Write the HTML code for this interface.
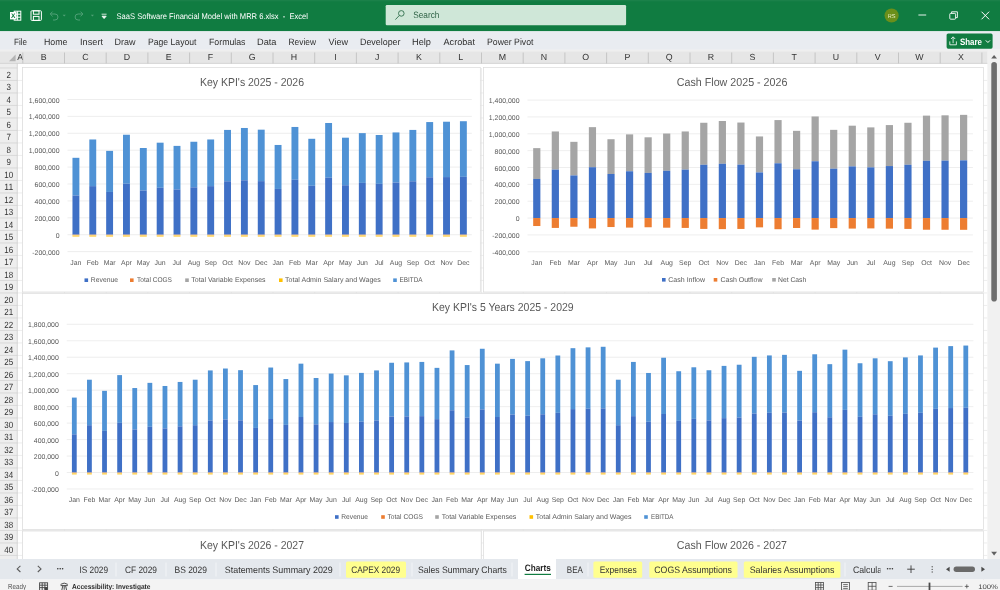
<!DOCTYPE html>
<html lang="en"><head><meta charset="utf-8"><title>SaaS Software Financial Model with MRR 6.xlsx - Excel</title><style>html,body{margin:0;padding:0;background:#fff;overflow:hidden}body{width:1000px;height:590px}svg text{white-space:pre;text-rendering:geometricPrecision}</style></head>
<body>
<svg width="1000" height="590" viewBox="0 0 1000 590" font-family='"Liberation Sans", sans-serif' style="display:block;will-change:transform">
<rect x="0.00" y="0.00" width="1000.00" height="590.00" fill="#ffffff" />
<line x1="22.80" y1="68.00" x2="22.80" y2="559.00" stroke="#e2e2e2" stroke-width="0.6" />
<line x1="64.50" y1="68.00" x2="64.50" y2="559.00" stroke="#e2e2e2" stroke-width="0.6" />
<line x1="106.20" y1="68.00" x2="106.20" y2="559.00" stroke="#e2e2e2" stroke-width="0.6" />
<line x1="147.90" y1="68.00" x2="147.90" y2="559.00" stroke="#e2e2e2" stroke-width="0.6" />
<line x1="189.60" y1="68.00" x2="189.60" y2="559.00" stroke="#e2e2e2" stroke-width="0.6" />
<line x1="231.30" y1="68.00" x2="231.30" y2="559.00" stroke="#e2e2e2" stroke-width="0.6" />
<line x1="273.00" y1="68.00" x2="273.00" y2="559.00" stroke="#e2e2e2" stroke-width="0.6" />
<line x1="314.70" y1="68.00" x2="314.70" y2="559.00" stroke="#e2e2e2" stroke-width="0.6" />
<line x1="356.40" y1="68.00" x2="356.40" y2="559.00" stroke="#e2e2e2" stroke-width="0.6" />
<line x1="398.10" y1="68.00" x2="398.10" y2="559.00" stroke="#e2e2e2" stroke-width="0.6" />
<line x1="439.80" y1="68.00" x2="439.80" y2="559.00" stroke="#e2e2e2" stroke-width="0.6" />
<line x1="481.50" y1="68.00" x2="481.50" y2="559.00" stroke="#e2e2e2" stroke-width="0.6" />
<line x1="523.20" y1="68.00" x2="523.20" y2="559.00" stroke="#e2e2e2" stroke-width="0.6" />
<line x1="564.90" y1="68.00" x2="564.90" y2="559.00" stroke="#e2e2e2" stroke-width="0.6" />
<line x1="606.60" y1="68.00" x2="606.60" y2="559.00" stroke="#e2e2e2" stroke-width="0.6" />
<line x1="648.30" y1="68.00" x2="648.30" y2="559.00" stroke="#e2e2e2" stroke-width="0.6" />
<line x1="690.00" y1="68.00" x2="690.00" y2="559.00" stroke="#e2e2e2" stroke-width="0.6" />
<line x1="731.70" y1="68.00" x2="731.70" y2="559.00" stroke="#e2e2e2" stroke-width="0.6" />
<line x1="773.40" y1="68.00" x2="773.40" y2="559.00" stroke="#e2e2e2" stroke-width="0.6" />
<line x1="815.10" y1="68.00" x2="815.10" y2="559.00" stroke="#e2e2e2" stroke-width="0.6" />
<line x1="856.80" y1="68.00" x2="856.80" y2="559.00" stroke="#e2e2e2" stroke-width="0.6" />
<line x1="898.50" y1="68.00" x2="898.50" y2="559.00" stroke="#e2e2e2" stroke-width="0.6" />
<line x1="940.20" y1="68.00" x2="940.20" y2="559.00" stroke="#e2e2e2" stroke-width="0.6" />
<line x1="981.90" y1="68.00" x2="981.90" y2="559.00" stroke="#e2e2e2" stroke-width="0.6" />
<line x1="17.30" y1="80.45" x2="987.40" y2="80.45" stroke="#e2e2e2" stroke-width="0.6" />
<line x1="17.30" y1="92.95" x2="987.40" y2="92.95" stroke="#e2e2e2" stroke-width="0.6" />
<line x1="17.30" y1="105.45" x2="987.40" y2="105.45" stroke="#e2e2e2" stroke-width="0.6" />
<line x1="17.30" y1="117.95" x2="987.40" y2="117.95" stroke="#e2e2e2" stroke-width="0.6" />
<line x1="17.30" y1="130.45" x2="987.40" y2="130.45" stroke="#e2e2e2" stroke-width="0.6" />
<line x1="17.30" y1="142.95" x2="987.40" y2="142.95" stroke="#e2e2e2" stroke-width="0.6" />
<line x1="17.30" y1="155.45" x2="987.40" y2="155.45" stroke="#e2e2e2" stroke-width="0.6" />
<line x1="17.30" y1="167.95" x2="987.40" y2="167.95" stroke="#e2e2e2" stroke-width="0.6" />
<line x1="17.30" y1="180.45" x2="987.40" y2="180.45" stroke="#e2e2e2" stroke-width="0.6" />
<line x1="17.30" y1="192.95" x2="987.40" y2="192.95" stroke="#e2e2e2" stroke-width="0.6" />
<line x1="17.30" y1="205.45" x2="987.40" y2="205.45" stroke="#e2e2e2" stroke-width="0.6" />
<line x1="17.30" y1="217.95" x2="987.40" y2="217.95" stroke="#e2e2e2" stroke-width="0.6" />
<line x1="17.30" y1="230.45" x2="987.40" y2="230.45" stroke="#e2e2e2" stroke-width="0.6" />
<line x1="17.30" y1="242.95" x2="987.40" y2="242.95" stroke="#e2e2e2" stroke-width="0.6" />
<line x1="17.30" y1="255.45" x2="987.40" y2="255.45" stroke="#e2e2e2" stroke-width="0.6" />
<line x1="17.30" y1="267.95" x2="987.40" y2="267.95" stroke="#e2e2e2" stroke-width="0.6" />
<line x1="17.30" y1="280.45" x2="987.40" y2="280.45" stroke="#e2e2e2" stroke-width="0.6" />
<line x1="17.30" y1="292.95" x2="987.40" y2="292.95" stroke="#e2e2e2" stroke-width="0.6" />
<line x1="17.30" y1="305.45" x2="987.40" y2="305.45" stroke="#e2e2e2" stroke-width="0.6" />
<line x1="17.30" y1="317.95" x2="987.40" y2="317.95" stroke="#e2e2e2" stroke-width="0.6" />
<line x1="17.30" y1="330.45" x2="987.40" y2="330.45" stroke="#e2e2e2" stroke-width="0.6" />
<line x1="17.30" y1="342.95" x2="987.40" y2="342.95" stroke="#e2e2e2" stroke-width="0.6" />
<line x1="17.30" y1="355.45" x2="987.40" y2="355.45" stroke="#e2e2e2" stroke-width="0.6" />
<line x1="17.30" y1="367.95" x2="987.40" y2="367.95" stroke="#e2e2e2" stroke-width="0.6" />
<line x1="17.30" y1="380.45" x2="987.40" y2="380.45" stroke="#e2e2e2" stroke-width="0.6" />
<line x1="17.30" y1="392.95" x2="987.40" y2="392.95" stroke="#e2e2e2" stroke-width="0.6" />
<line x1="17.30" y1="405.45" x2="987.40" y2="405.45" stroke="#e2e2e2" stroke-width="0.6" />
<line x1="17.30" y1="417.95" x2="987.40" y2="417.95" stroke="#e2e2e2" stroke-width="0.6" />
<line x1="17.30" y1="430.45" x2="987.40" y2="430.45" stroke="#e2e2e2" stroke-width="0.6" />
<line x1="17.30" y1="442.95" x2="987.40" y2="442.95" stroke="#e2e2e2" stroke-width="0.6" />
<line x1="17.30" y1="455.45" x2="987.40" y2="455.45" stroke="#e2e2e2" stroke-width="0.6" />
<line x1="17.30" y1="467.95" x2="987.40" y2="467.95" stroke="#e2e2e2" stroke-width="0.6" />
<line x1="17.30" y1="480.45" x2="987.40" y2="480.45" stroke="#e2e2e2" stroke-width="0.6" />
<line x1="17.30" y1="492.95" x2="987.40" y2="492.95" stroke="#e2e2e2" stroke-width="0.6" />
<line x1="17.30" y1="505.45" x2="987.40" y2="505.45" stroke="#e2e2e2" stroke-width="0.6" />
<line x1="17.30" y1="517.95" x2="987.40" y2="517.95" stroke="#e2e2e2" stroke-width="0.6" />
<line x1="17.30" y1="530.45" x2="987.40" y2="530.45" stroke="#e2e2e2" stroke-width="0.6" />
<line x1="17.30" y1="542.95" x2="987.40" y2="542.95" stroke="#e2e2e2" stroke-width="0.6" />
<line x1="17.30" y1="555.45" x2="987.40" y2="555.45" stroke="#e2e2e2" stroke-width="0.6" />
<rect x="22.50" y="67.50" width="457.80" height="224.50" fill="#ffffff" stroke="#dadada" stroke-width="0.7"/>
<text x="200.00" y="86.00" font-size="11.6" fill="#595959" textLength="104.00" lengthAdjust="spacingAndGlyphs">Key KPI's 2025 - 2026</text>
<line x1="67.50" y1="99.50" x2="471.80" y2="99.50" stroke="#e6e6e6" stroke-width="0.7" />
<text x="59.50" y="103.00" font-size="6.9" fill="#595959" text-anchor="end">1,600,000</text>
<line x1="67.50" y1="116.40" x2="471.80" y2="116.40" stroke="#e6e6e6" stroke-width="0.7" />
<text x="59.50" y="119.00" font-size="6.9" fill="#595959" text-anchor="end">1,400,000</text>
<line x1="67.50" y1="133.30" x2="471.80" y2="133.30" stroke="#e6e6e6" stroke-width="0.7" />
<text x="59.50" y="136.00" font-size="6.9" fill="#595959" text-anchor="end">1,200,000</text>
<line x1="67.50" y1="150.20" x2="471.80" y2="150.20" stroke="#e6e6e6" stroke-width="0.7" />
<text x="59.50" y="153.00" font-size="6.9" fill="#595959" text-anchor="end">1,000,000</text>
<line x1="67.50" y1="167.10" x2="471.80" y2="167.10" stroke="#e6e6e6" stroke-width="0.7" />
<text x="59.50" y="170.00" font-size="6.9" fill="#595959" text-anchor="end">800,000</text>
<line x1="67.50" y1="184.00" x2="471.80" y2="184.00" stroke="#e6e6e6" stroke-width="0.7" />
<text x="59.50" y="187.00" font-size="6.9" fill="#595959" text-anchor="end">600,000</text>
<line x1="67.50" y1="200.90" x2="471.80" y2="200.90" stroke="#e6e6e6" stroke-width="0.7" />
<text x="59.50" y="204.00" font-size="6.9" fill="#595959" text-anchor="end">400,000</text>
<line x1="67.50" y1="217.80" x2="471.80" y2="217.80" stroke="#e6e6e6" stroke-width="0.7" />
<text x="59.50" y="221.00" font-size="6.9" fill="#595959" text-anchor="end">200,000</text>
<line x1="67.50" y1="234.70" x2="471.80" y2="234.70" stroke="#e6e6e6" stroke-width="0.7" />
<text x="59.50" y="238.00" font-size="6.9" fill="#595959" text-anchor="end">0</text>
<line x1="67.50" y1="251.60" x2="471.80" y2="251.60" stroke="#e6e6e6" stroke-width="0.7" />
<text x="59.50" y="255.00" font-size="6.9" fill="#595959" text-anchor="end">-200,000</text>
<rect x="72.47" y="157.81" width="6.90" height="37.68" fill="#4f92d5" />
<rect x="72.47" y="195.48" width="6.90" height="39.22" fill="#3f70c6" />
<rect x="72.47" y="234.70" width="6.90" height="0.60" fill="#f2a263" />
<rect x="72.47" y="235.30" width="6.90" height="1.40" fill="#ffd050" />
<text x="75.92" y="265.00" font-size="6.9" fill="#595959" text-anchor="middle">Jan</text>
<rect x="89.32" y="139.47" width="6.90" height="46.66" fill="#4f92d5" />
<rect x="89.32" y="186.13" width="6.90" height="48.57" fill="#3f70c6" />
<rect x="89.32" y="234.70" width="6.90" height="0.60" fill="#f2a263" />
<rect x="89.32" y="235.30" width="6.90" height="1.40" fill="#ffd050" />
<text x="92.77" y="265.00" font-size="6.9" fill="#595959" text-anchor="middle">Feb</text>
<rect x="106.16" y="150.88" width="6.90" height="41.07" fill="#4f92d5" />
<rect x="106.16" y="191.95" width="6.90" height="42.75" fill="#3f70c6" />
<rect x="106.16" y="234.70" width="6.90" height="0.60" fill="#f2a263" />
<rect x="106.16" y="235.30" width="6.90" height="1.40" fill="#ffd050" />
<text x="109.61" y="265.00" font-size="6.9" fill="#595959" text-anchor="middle">Mar</text>
<rect x="123.01" y="134.74" width="6.90" height="48.98" fill="#4f92d5" />
<rect x="123.01" y="183.72" width="6.90" height="50.98" fill="#3f70c6" />
<rect x="123.01" y="234.70" width="6.90" height="0.60" fill="#f2a263" />
<rect x="123.01" y="235.30" width="6.90" height="1.40" fill="#ffd050" />
<text x="126.46" y="265.00" font-size="6.9" fill="#595959" text-anchor="middle">Apr</text>
<rect x="139.86" y="148.00" width="6.90" height="42.48" fill="#4f92d5" />
<rect x="139.86" y="190.48" width="6.90" height="44.22" fill="#3f70c6" />
<rect x="139.86" y="234.70" width="6.90" height="0.60" fill="#f2a263" />
<rect x="139.86" y="235.30" width="6.90" height="1.40" fill="#ffd050" />
<text x="143.31" y="265.00" font-size="6.9" fill="#595959" text-anchor="middle">May</text>
<rect x="156.70" y="142.68" width="6.90" height="45.09" fill="#4f92d5" />
<rect x="156.70" y="187.77" width="6.90" height="46.93" fill="#3f70c6" />
<rect x="156.70" y="234.70" width="6.90" height="0.60" fill="#f2a263" />
<rect x="156.70" y="235.30" width="6.90" height="1.40" fill="#ffd050" />
<text x="160.15" y="265.00" font-size="6.9" fill="#595959" text-anchor="middle">Jun</text>
<rect x="173.55" y="145.89" width="6.90" height="43.52" fill="#4f92d5" />
<rect x="173.55" y="189.41" width="6.90" height="45.29" fill="#3f70c6" />
<rect x="173.55" y="234.70" width="6.90" height="0.60" fill="#f2a263" />
<rect x="173.55" y="235.30" width="6.90" height="1.40" fill="#ffd050" />
<text x="177.00" y="265.00" font-size="6.9" fill="#595959" text-anchor="middle">Jul</text>
<rect x="190.39" y="141.75" width="6.90" height="45.55" fill="#4f92d5" />
<rect x="190.39" y="187.30" width="6.90" height="47.40" fill="#3f70c6" />
<rect x="190.39" y="234.70" width="6.90" height="0.60" fill="#f2a263" />
<rect x="190.39" y="235.30" width="6.90" height="1.40" fill="#ffd050" />
<text x="193.84" y="265.00" font-size="6.9" fill="#595959" text-anchor="middle">Aug</text>
<rect x="207.24" y="139.47" width="6.90" height="46.66" fill="#4f92d5" />
<rect x="207.24" y="186.13" width="6.90" height="48.57" fill="#3f70c6" />
<rect x="207.24" y="234.70" width="6.90" height="0.60" fill="#f2a263" />
<rect x="207.24" y="235.30" width="6.90" height="1.40" fill="#ffd050" />
<text x="210.69" y="265.00" font-size="6.9" fill="#595959" text-anchor="middle">Sep</text>
<rect x="224.09" y="129.92" width="6.90" height="51.34" fill="#4f92d5" />
<rect x="224.09" y="181.26" width="6.90" height="53.44" fill="#3f70c6" />
<rect x="224.09" y="234.70" width="6.90" height="0.60" fill="#f2a263" />
<rect x="224.09" y="235.30" width="6.90" height="1.40" fill="#ffd050" />
<text x="227.54" y="265.00" font-size="6.9" fill="#595959" text-anchor="middle">Oct</text>
<rect x="240.93" y="127.98" width="6.90" height="52.29" fill="#4f92d5" />
<rect x="240.93" y="180.27" width="6.90" height="54.43" fill="#3f70c6" />
<rect x="240.93" y="234.70" width="6.90" height="0.60" fill="#f2a263" />
<rect x="240.93" y="235.30" width="6.90" height="1.40" fill="#ffd050" />
<text x="244.38" y="265.00" font-size="6.9" fill="#595959" text-anchor="middle">Nov</text>
<rect x="257.78" y="129.67" width="6.90" height="51.47" fill="#4f92d5" />
<rect x="257.78" y="181.13" width="6.90" height="53.57" fill="#3f70c6" />
<rect x="257.78" y="234.70" width="6.90" height="0.60" fill="#f2a263" />
<rect x="257.78" y="235.30" width="6.90" height="1.40" fill="#ffd050" />
<text x="261.23" y="265.00" font-size="6.9" fill="#595959" text-anchor="middle">Dec</text>
<rect x="274.62" y="144.96" width="6.90" height="43.97" fill="#4f92d5" />
<rect x="274.62" y="188.93" width="6.90" height="45.77" fill="#3f70c6" />
<rect x="274.62" y="234.70" width="6.90" height="0.60" fill="#f2a263" />
<rect x="274.62" y="235.30" width="6.90" height="1.40" fill="#ffd050" />
<text x="278.07" y="265.00" font-size="6.9" fill="#595959" text-anchor="middle">Jan</text>
<rect x="291.47" y="126.96" width="6.90" height="52.79" fill="#4f92d5" />
<rect x="291.47" y="179.75" width="6.90" height="54.95" fill="#3f70c6" />
<rect x="291.47" y="234.70" width="6.90" height="0.60" fill="#f2a263" />
<rect x="291.47" y="235.30" width="6.90" height="1.40" fill="#ffd050" />
<text x="294.92" y="265.00" font-size="6.9" fill="#595959" text-anchor="middle">Feb</text>
<rect x="308.31" y="138.79" width="6.90" height="46.99" fill="#4f92d5" />
<rect x="308.31" y="185.79" width="6.90" height="48.91" fill="#3f70c6" />
<rect x="308.31" y="234.70" width="6.90" height="0.60" fill="#f2a263" />
<rect x="308.31" y="235.30" width="6.90" height="1.40" fill="#ffd050" />
<text x="311.76" y="265.00" font-size="6.9" fill="#595959" text-anchor="middle">Mar</text>
<rect x="325.16" y="122.99" width="6.90" height="54.74" fill="#4f92d5" />
<rect x="325.16" y="177.73" width="6.90" height="56.97" fill="#3f70c6" />
<rect x="325.16" y="234.70" width="6.90" height="0.60" fill="#f2a263" />
<rect x="325.16" y="235.30" width="6.90" height="1.40" fill="#ffd050" />
<text x="328.61" y="265.00" font-size="6.9" fill="#595959" text-anchor="middle">Apr</text>
<rect x="342.01" y="137.69" width="6.90" height="47.53" fill="#4f92d5" />
<rect x="342.01" y="185.23" width="6.90" height="49.47" fill="#3f70c6" />
<rect x="342.01" y="234.70" width="6.90" height="0.60" fill="#f2a263" />
<rect x="342.01" y="235.30" width="6.90" height="1.40" fill="#ffd050" />
<text x="345.46" y="265.00" font-size="6.9" fill="#595959" text-anchor="middle">May</text>
<rect x="358.85" y="133.13" width="6.90" height="49.77" fill="#4f92d5" />
<rect x="358.85" y="182.90" width="6.90" height="51.80" fill="#3f70c6" />
<rect x="358.85" y="234.70" width="6.90" height="0.60" fill="#f2a263" />
<rect x="358.85" y="235.30" width="6.90" height="1.40" fill="#ffd050" />
<text x="362.30" y="265.00" font-size="6.9" fill="#595959" text-anchor="middle">Jun</text>
<rect x="375.70" y="134.99" width="6.90" height="48.86" fill="#4f92d5" />
<rect x="375.70" y="183.85" width="6.90" height="50.85" fill="#3f70c6" />
<rect x="375.70" y="234.70" width="6.90" height="0.60" fill="#f2a263" />
<rect x="375.70" y="235.30" width="6.90" height="1.40" fill="#ffd050" />
<text x="379.15" y="265.00" font-size="6.9" fill="#595959" text-anchor="middle">Jul</text>
<rect x="392.54" y="132.45" width="6.90" height="50.10" fill="#4f92d5" />
<rect x="392.54" y="182.56" width="6.90" height="52.14" fill="#3f70c6" />
<rect x="392.54" y="234.70" width="6.90" height="0.60" fill="#f2a263" />
<rect x="392.54" y="235.30" width="6.90" height="1.40" fill="#ffd050" />
<text x="395.99" y="265.00" font-size="6.9" fill="#595959" text-anchor="middle">Aug</text>
<rect x="409.39" y="129.92" width="6.90" height="51.34" fill="#4f92d5" />
<rect x="409.39" y="181.26" width="6.90" height="53.44" fill="#3f70c6" />
<rect x="409.39" y="234.70" width="6.90" height="0.60" fill="#f2a263" />
<rect x="409.39" y="235.30" width="6.90" height="1.40" fill="#ffd050" />
<text x="412.84" y="265.00" font-size="6.9" fill="#595959" text-anchor="middle">Sep</text>
<rect x="426.24" y="122.06" width="6.90" height="55.19" fill="#4f92d5" />
<rect x="426.24" y="177.25" width="6.90" height="57.45" fill="#3f70c6" />
<rect x="426.24" y="234.70" width="6.90" height="0.60" fill="#f2a263" />
<rect x="426.24" y="235.30" width="6.90" height="1.40" fill="#ffd050" />
<text x="429.69" y="265.00" font-size="6.9" fill="#595959" text-anchor="middle">Oct</text>
<rect x="443.08" y="121.72" width="6.90" height="55.36" fill="#4f92d5" />
<rect x="443.08" y="177.08" width="6.90" height="57.62" fill="#3f70c6" />
<rect x="443.08" y="234.70" width="6.90" height="0.60" fill="#f2a263" />
<rect x="443.08" y="235.30" width="6.90" height="1.40" fill="#ffd050" />
<text x="446.53" y="265.00" font-size="6.9" fill="#595959" text-anchor="middle">Nov</text>
<rect x="459.93" y="121.22" width="6.90" height="55.61" fill="#4f92d5" />
<rect x="459.93" y="176.82" width="6.90" height="57.88" fill="#3f70c6" />
<rect x="459.93" y="234.70" width="6.90" height="0.60" fill="#f2a263" />
<rect x="459.93" y="235.30" width="6.90" height="1.40" fill="#ffd050" />
<text x="463.38" y="265.00" font-size="6.9" fill="#595959" text-anchor="middle">Dec</text>
<rect x="84.50" y="278.40" width="3.60" height="3.60" fill="#3f70c6" />
<text x="90.80" y="282.00" font-size="6.9" fill="#595959" textLength="27.20" lengthAdjust="spacingAndGlyphs">Revenue</text>
<rect x="130.00" y="278.40" width="3.60" height="3.60" fill="#ed7d31" />
<text x="137.00" y="282.00" font-size="6.9" fill="#595959" textLength="35.00" lengthAdjust="spacingAndGlyphs">Total COGS</text>
<rect x="185.20" y="278.40" width="3.60" height="3.60" fill="#a5a5a5" />
<text x="191.30" y="282.00" font-size="6.9" fill="#595959" textLength="74.20" lengthAdjust="spacingAndGlyphs">Total Variable Expenses</text>
<rect x="279.00" y="278.40" width="3.60" height="3.60" fill="#ffc000" />
<text x="285.00" y="282.00" font-size="6.9" fill="#595959" textLength="95.80" lengthAdjust="spacingAndGlyphs">Total Admin Salary and Wages</text>
<rect x="393.20" y="278.40" width="3.60" height="3.60" fill="#4f92d5" />
<text x="399.50" y="282.00" font-size="6.9" fill="#595959" textLength="23.00" lengthAdjust="spacingAndGlyphs">EBITDA</text>
<rect x="483.50" y="67.50" width="500.00" height="224.50" fill="#ffffff" stroke="#dadada" stroke-width="0.7"/>
<text x="676.80" y="86.00" font-size="11.6" fill="#595959" textLength="110.60" lengthAdjust="spacingAndGlyphs">Cash Flow 2025 - 2026</text>
<line x1="527.50" y1="100.10" x2="972.90" y2="100.10" stroke="#e6e6e6" stroke-width="0.7" />
<text x="519.50" y="103.00" font-size="6.9" fill="#595959" text-anchor="end">1,400,000</text>
<line x1="527.50" y1="116.95" x2="972.90" y2="116.95" stroke="#e6e6e6" stroke-width="0.7" />
<text x="519.50" y="120.00" font-size="6.9" fill="#595959" text-anchor="end">1,200,000</text>
<line x1="527.50" y1="133.80" x2="972.90" y2="133.80" stroke="#e6e6e6" stroke-width="0.7" />
<text x="519.50" y="137.00" font-size="6.9" fill="#595959" text-anchor="end">1,000,000</text>
<line x1="527.50" y1="150.65" x2="972.90" y2="150.65" stroke="#e6e6e6" stroke-width="0.7" />
<text x="519.50" y="154.00" font-size="6.9" fill="#595959" text-anchor="end">800,000</text>
<line x1="527.50" y1="167.50" x2="972.90" y2="167.50" stroke="#e6e6e6" stroke-width="0.7" />
<text x="519.50" y="171.00" font-size="6.9" fill="#595959" text-anchor="end">600,000</text>
<line x1="527.50" y1="184.35" x2="972.90" y2="184.35" stroke="#e6e6e6" stroke-width="0.7" />
<text x="519.50" y="187.00" font-size="6.9" fill="#595959" text-anchor="end">400,000</text>
<line x1="527.50" y1="201.20" x2="972.90" y2="201.20" stroke="#e6e6e6" stroke-width="0.7" />
<text x="519.50" y="204.00" font-size="6.9" fill="#595959" text-anchor="end">200,000</text>
<line x1="527.50" y1="218.05" x2="972.90" y2="218.05" stroke="#e6e6e6" stroke-width="0.7" />
<text x="519.50" y="221.00" font-size="6.9" fill="#595959" text-anchor="end">0</text>
<line x1="527.50" y1="234.90" x2="972.90" y2="234.90" stroke="#e6e6e6" stroke-width="0.7" />
<text x="519.50" y="238.00" font-size="6.9" fill="#595959" text-anchor="end">-200,000</text>
<line x1="527.50" y1="251.75" x2="972.90" y2="251.75" stroke="#e6e6e6" stroke-width="0.7" />
<text x="519.50" y="255.00" font-size="6.9" fill="#595959" text-anchor="end">-400,000</text>
<rect x="533.18" y="148.13" width="7.20" height="30.82" fill="#a5a5a5" />
<rect x="533.18" y="178.95" width="7.20" height="39.10" fill="#3f70c6" />
<rect x="533.18" y="218.05" width="7.20" height="7.97" fill="#ed7d31" />
<text x="536.78" y="265.00" font-size="6.9" fill="#595959" text-anchor="middle">Jan</text>
<rect x="551.74" y="131.46" width="7.20" height="38.17" fill="#a5a5a5" />
<rect x="551.74" y="169.63" width="7.20" height="48.42" fill="#3f70c6" />
<rect x="551.74" y="218.05" width="7.20" height="9.87" fill="#ed7d31" />
<text x="555.34" y="265.00" font-size="6.9" fill="#595959" text-anchor="middle">Feb</text>
<rect x="570.30" y="141.83" width="7.20" height="33.60" fill="#a5a5a5" />
<rect x="570.30" y="175.43" width="7.20" height="42.62" fill="#3f70c6" />
<rect x="570.30" y="218.05" width="7.20" height="8.69" fill="#ed7d31" />
<text x="573.90" y="265.00" font-size="6.9" fill="#595959" text-anchor="middle">Mar</text>
<rect x="588.85" y="127.15" width="7.20" height="40.07" fill="#a5a5a5" />
<rect x="588.85" y="167.22" width="7.20" height="50.83" fill="#3f70c6" />
<rect x="588.85" y="218.05" width="7.20" height="10.37" fill="#ed7d31" />
<text x="592.45" y="265.00" font-size="6.9" fill="#595959" text-anchor="middle">Apr</text>
<rect x="607.41" y="139.22" width="7.20" height="34.75" fill="#a5a5a5" />
<rect x="607.41" y="173.97" width="7.20" height="44.08" fill="#3f70c6" />
<rect x="607.41" y="218.05" width="7.20" height="8.99" fill="#ed7d31" />
<text x="611.01" y="265.00" font-size="6.9" fill="#595959" text-anchor="middle">May</text>
<rect x="625.97" y="134.38" width="7.20" height="36.88" fill="#a5a5a5" />
<rect x="625.97" y="171.26" width="7.20" height="46.79" fill="#3f70c6" />
<rect x="625.97" y="218.05" width="7.20" height="9.54" fill="#ed7d31" />
<text x="629.57" y="265.00" font-size="6.9" fill="#595959" text-anchor="middle">Jun</text>
<rect x="644.53" y="137.30" width="7.20" height="35.60" fill="#a5a5a5" />
<rect x="644.53" y="172.89" width="7.20" height="45.16" fill="#3f70c6" />
<rect x="644.53" y="218.05" width="7.20" height="9.21" fill="#ed7d31" />
<text x="648.13" y="265.00" font-size="6.9" fill="#595959" text-anchor="middle">Jul</text>
<rect x="663.09" y="133.53" width="7.20" height="37.26" fill="#a5a5a5" />
<rect x="663.09" y="170.79" width="7.20" height="47.26" fill="#3f70c6" />
<rect x="663.09" y="218.05" width="7.20" height="9.64" fill="#ed7d31" />
<text x="666.69" y="265.00" font-size="6.9" fill="#595959" text-anchor="middle">Aug</text>
<rect x="681.65" y="131.46" width="7.20" height="38.17" fill="#a5a5a5" />
<rect x="681.65" y="169.63" width="7.20" height="48.42" fill="#3f70c6" />
<rect x="681.65" y="218.05" width="7.20" height="9.87" fill="#ed7d31" />
<text x="685.25" y="265.00" font-size="6.9" fill="#595959" text-anchor="middle">Sep</text>
<rect x="700.20" y="122.77" width="7.20" height="42.00" fill="#a5a5a5" />
<rect x="700.20" y="164.77" width="7.20" height="53.28" fill="#3f70c6" />
<rect x="700.20" y="218.05" width="7.20" height="10.86" fill="#ed7d31" />
<text x="703.80" y="265.00" font-size="6.9" fill="#595959" text-anchor="middle">Oct</text>
<rect x="718.76" y="121.01" width="7.20" height="42.78" fill="#a5a5a5" />
<rect x="718.76" y="163.78" width="7.20" height="54.27" fill="#3f70c6" />
<rect x="718.76" y="218.05" width="7.20" height="11.07" fill="#ed7d31" />
<text x="722.36" y="265.00" font-size="6.9" fill="#595959" text-anchor="middle">Nov</text>
<rect x="737.32" y="122.54" width="7.20" height="42.10" fill="#a5a5a5" />
<rect x="737.32" y="164.64" width="7.20" height="53.41" fill="#3f70c6" />
<rect x="737.32" y="218.05" width="7.20" height="10.89" fill="#ed7d31" />
<text x="740.92" y="265.00" font-size="6.9" fill="#595959" text-anchor="middle">Dec</text>
<rect x="755.88" y="136.45" width="7.20" height="35.97" fill="#a5a5a5" />
<rect x="755.88" y="172.42" width="7.20" height="45.63" fill="#3f70c6" />
<rect x="755.88" y="218.05" width="7.20" height="9.31" fill="#ed7d31" />
<text x="759.48" y="265.00" font-size="6.9" fill="#595959" text-anchor="middle">Jan</text>
<rect x="774.44" y="120.08" width="7.20" height="43.18" fill="#a5a5a5" />
<rect x="774.44" y="163.27" width="7.20" height="54.78" fill="#3f70c6" />
<rect x="774.44" y="218.05" width="7.20" height="11.17" fill="#ed7d31" />
<text x="778.04" y="265.00" font-size="6.9" fill="#595959" text-anchor="middle">Feb</text>
<rect x="793.00" y="130.84" width="7.20" height="38.44" fill="#a5a5a5" />
<rect x="793.00" y="169.28" width="7.20" height="48.77" fill="#3f70c6" />
<rect x="793.00" y="218.05" width="7.20" height="9.94" fill="#ed7d31" />
<text x="796.60" y="265.00" font-size="6.9" fill="#595959" text-anchor="middle">Mar</text>
<rect x="811.55" y="116.47" width="7.20" height="44.77" fill="#a5a5a5" />
<rect x="811.55" y="161.25" width="7.20" height="56.80" fill="#3f70c6" />
<rect x="811.55" y="218.05" width="7.20" height="11.58" fill="#ed7d31" />
<text x="815.15" y="265.00" font-size="6.9" fill="#595959" text-anchor="middle">Apr</text>
<rect x="830.11" y="129.84" width="7.20" height="38.88" fill="#a5a5a5" />
<rect x="830.11" y="168.72" width="7.20" height="49.33" fill="#3f70c6" />
<rect x="830.11" y="218.05" width="7.20" height="10.06" fill="#ed7d31" />
<text x="833.71" y="265.00" font-size="6.9" fill="#595959" text-anchor="middle">May</text>
<rect x="848.67" y="125.69" width="7.20" height="40.71" fill="#a5a5a5" />
<rect x="848.67" y="166.40" width="7.20" height="51.65" fill="#3f70c6" />
<rect x="848.67" y="218.05" width="7.20" height="10.53" fill="#ed7d31" />
<text x="852.27" y="265.00" font-size="6.9" fill="#595959" text-anchor="middle">Jun</text>
<rect x="867.23" y="127.38" width="7.20" height="39.96" fill="#a5a5a5" />
<rect x="867.23" y="167.35" width="7.20" height="50.70" fill="#3f70c6" />
<rect x="867.23" y="218.05" width="7.20" height="10.34" fill="#ed7d31" />
<text x="870.83" y="265.00" font-size="6.9" fill="#595959" text-anchor="middle">Jul</text>
<rect x="885.79" y="125.08" width="7.20" height="40.98" fill="#a5a5a5" />
<rect x="885.79" y="166.06" width="7.20" height="51.99" fill="#3f70c6" />
<rect x="885.79" y="218.05" width="7.20" height="10.60" fill="#ed7d31" />
<text x="889.39" y="265.00" font-size="6.9" fill="#595959" text-anchor="middle">Aug</text>
<rect x="904.35" y="122.77" width="7.20" height="42.00" fill="#a5a5a5" />
<rect x="904.35" y="164.77" width="7.20" height="53.28" fill="#3f70c6" />
<rect x="904.35" y="218.05" width="7.20" height="10.86" fill="#ed7d31" />
<text x="907.95" y="265.00" font-size="6.9" fill="#595959" text-anchor="middle">Sep</text>
<rect x="922.90" y="115.63" width="7.20" height="45.15" fill="#a5a5a5" />
<rect x="922.90" y="160.77" width="7.20" height="57.28" fill="#3f70c6" />
<rect x="922.90" y="218.05" width="7.20" height="11.68" fill="#ed7d31" />
<text x="926.50" y="265.00" font-size="6.9" fill="#595959" text-anchor="middle">Oct</text>
<rect x="941.46" y="115.32" width="7.20" height="45.28" fill="#a5a5a5" />
<rect x="941.46" y="160.60" width="7.20" height="57.45" fill="#3f70c6" />
<rect x="941.46" y="218.05" width="7.20" height="11.71" fill="#ed7d31" />
<text x="945.06" y="265.00" font-size="6.9" fill="#595959" text-anchor="middle">Nov</text>
<rect x="960.02" y="114.86" width="7.20" height="45.49" fill="#a5a5a5" />
<rect x="960.02" y="160.34" width="7.20" height="57.71" fill="#3f70c6" />
<rect x="960.02" y="218.05" width="7.20" height="11.77" fill="#ed7d31" />
<text x="963.62" y="265.00" font-size="6.9" fill="#595959" text-anchor="middle">Dec</text>
<rect x="662.00" y="278.00" width="3.60" height="3.60" fill="#3f70c6" />
<text x="668.30" y="282.00" font-size="6.9" fill="#595959" textLength="36.70" lengthAdjust="spacingAndGlyphs">Cash Inflow</text>
<rect x="713.70" y="278.00" width="3.60" height="3.60" fill="#ed7d31" />
<text x="720.50" y="282.00" font-size="6.9" fill="#595959" textLength="42.00" lengthAdjust="spacingAndGlyphs">Cash Outflow</text>
<rect x="772.20" y="278.00" width="3.60" height="3.60" fill="#a5a5a5" />
<text x="778.00" y="282.00" font-size="6.9" fill="#595959" textLength="28.30" lengthAdjust="spacingAndGlyphs">Net Cash</text>
<rect x="22.50" y="293.30" width="961.00" height="236.10" fill="#ffffff" stroke="#dadada" stroke-width="0.7"/>
<text x="432.00" y="311.00" font-size="11.6" fill="#595959" textLength="141.60" lengthAdjust="spacingAndGlyphs">Key KPI's 5 Years 2025 - 2029</text>
<line x1="66.75" y1="324.30" x2="973.35" y2="324.30" stroke="#e6e6e6" stroke-width="0.7" />
<text x="58.75" y="327.00" font-size="6.9" fill="#595959" text-anchor="end">1,800,000</text>
<line x1="66.75" y1="340.77" x2="973.35" y2="340.77" stroke="#e6e6e6" stroke-width="0.7" />
<text x="58.75" y="344.00" font-size="6.9" fill="#595959" text-anchor="end">1,600,000</text>
<line x1="66.75" y1="357.24" x2="973.35" y2="357.24" stroke="#e6e6e6" stroke-width="0.7" />
<text x="58.75" y="360.00" font-size="6.9" fill="#595959" text-anchor="end">1,400,000</text>
<line x1="66.75" y1="373.71" x2="973.35" y2="373.71" stroke="#e6e6e6" stroke-width="0.7" />
<text x="58.75" y="377.00" font-size="6.9" fill="#595959" text-anchor="end">1,200,000</text>
<line x1="66.75" y1="390.18" x2="973.35" y2="390.18" stroke="#e6e6e6" stroke-width="0.7" />
<text x="58.75" y="393.00" font-size="6.9" fill="#595959" text-anchor="end">1,000,000</text>
<line x1="66.75" y1="406.65" x2="973.35" y2="406.65" stroke="#e6e6e6" stroke-width="0.7" />
<text x="58.75" y="410.00" font-size="6.9" fill="#595959" text-anchor="end">800,000</text>
<line x1="66.75" y1="423.12" x2="973.35" y2="423.12" stroke="#e6e6e6" stroke-width="0.7" />
<text x="58.75" y="426.00" font-size="6.9" fill="#595959" text-anchor="end">600,000</text>
<line x1="66.75" y1="439.59" x2="973.35" y2="439.59" stroke="#e6e6e6" stroke-width="0.7" />
<text x="58.75" y="443.00" font-size="6.9" fill="#595959" text-anchor="end">400,000</text>
<line x1="66.75" y1="456.06" x2="973.35" y2="456.06" stroke="#e6e6e6" stroke-width="0.7" />
<text x="58.75" y="459.00" font-size="6.9" fill="#595959" text-anchor="end">200,000</text>
<line x1="66.75" y1="472.53" x2="973.35" y2="472.53" stroke="#e6e6e6" stroke-width="0.7" />
<text x="58.75" y="476.00" font-size="6.9" fill="#595959" text-anchor="end">0</text>
<line x1="66.75" y1="489.00" x2="973.35" y2="489.00" stroke="#e6e6e6" stroke-width="0.7" />
<text x="58.75" y="492.00" font-size="6.9" fill="#595959" text-anchor="end">-200,000</text>
<rect x="71.91" y="397.59" width="4.80" height="36.72" fill="#4f92d5" />
<rect x="71.91" y="434.31" width="4.80" height="38.22" fill="#3f70c6" />
<rect x="71.91" y="472.53" width="4.80" height="0.60" fill="#f2a263" />
<rect x="71.91" y="473.13" width="4.80" height="1.40" fill="#ffd050" />
<text x="74.31" y="502.00" font-size="6.9" fill="#595959" text-anchor="middle">Jan</text>
<rect x="87.02" y="379.72" width="4.80" height="45.48" fill="#4f92d5" />
<rect x="87.02" y="425.20" width="4.80" height="47.33" fill="#3f70c6" />
<rect x="87.02" y="472.53" width="4.80" height="0.60" fill="#f2a263" />
<rect x="87.02" y="473.13" width="4.80" height="1.40" fill="#ffd050" />
<text x="89.42" y="502.00" font-size="6.9" fill="#595959" text-anchor="middle">Feb</text>
<rect x="102.12" y="390.84" width="4.80" height="40.03" fill="#4f92d5" />
<rect x="102.12" y="430.87" width="4.80" height="41.66" fill="#3f70c6" />
<rect x="102.12" y="472.53" width="4.80" height="0.60" fill="#f2a263" />
<rect x="102.12" y="473.13" width="4.80" height="1.40" fill="#ffd050" />
<text x="104.53" y="502.00" font-size="6.9" fill="#595959" text-anchor="middle">Mar</text>
<rect x="117.23" y="375.11" width="4.80" height="47.74" fill="#4f92d5" />
<rect x="117.23" y="422.85" width="4.80" height="49.68" fill="#3f70c6" />
<rect x="117.23" y="472.53" width="4.80" height="0.60" fill="#f2a263" />
<rect x="117.23" y="473.13" width="4.80" height="1.40" fill="#ffd050" />
<text x="119.64" y="502.00" font-size="6.9" fill="#595959" text-anchor="middle">Apr</text>
<rect x="132.34" y="388.04" width="4.80" height="41.40" fill="#4f92d5" />
<rect x="132.34" y="429.44" width="4.80" height="43.09" fill="#3f70c6" />
<rect x="132.34" y="472.53" width="4.80" height="0.60" fill="#f2a263" />
<rect x="132.34" y="473.13" width="4.80" height="1.40" fill="#ffd050" />
<text x="134.75" y="502.00" font-size="6.9" fill="#595959" text-anchor="middle">May</text>
<rect x="147.46" y="382.85" width="4.80" height="43.94" fill="#4f92d5" />
<rect x="147.46" y="426.79" width="4.80" height="45.74" fill="#3f70c6" />
<rect x="147.46" y="472.53" width="4.80" height="0.60" fill="#f2a263" />
<rect x="147.46" y="473.13" width="4.80" height="1.40" fill="#ffd050" />
<text x="149.86" y="502.00" font-size="6.9" fill="#595959" text-anchor="middle">Jun</text>
<rect x="162.56" y="385.98" width="4.80" height="42.41" fill="#4f92d5" />
<rect x="162.56" y="428.39" width="4.80" height="44.14" fill="#3f70c6" />
<rect x="162.56" y="472.53" width="4.80" height="0.60" fill="#f2a263" />
<rect x="162.56" y="473.13" width="4.80" height="1.40" fill="#ffd050" />
<text x="164.97" y="502.00" font-size="6.9" fill="#595959" text-anchor="middle">Jul</text>
<rect x="177.67" y="381.94" width="4.80" height="44.39" fill="#4f92d5" />
<rect x="177.67" y="426.33" width="4.80" height="46.20" fill="#3f70c6" />
<rect x="177.67" y="472.53" width="4.80" height="0.60" fill="#f2a263" />
<rect x="177.67" y="473.13" width="4.80" height="1.40" fill="#ffd050" />
<text x="180.07" y="502.00" font-size="6.9" fill="#595959" text-anchor="middle">Aug</text>
<rect x="192.78" y="379.72" width="4.80" height="45.48" fill="#4f92d5" />
<rect x="192.78" y="425.20" width="4.80" height="47.33" fill="#3f70c6" />
<rect x="192.78" y="472.53" width="4.80" height="0.60" fill="#f2a263" />
<rect x="192.78" y="473.13" width="4.80" height="1.40" fill="#ffd050" />
<text x="195.19" y="502.00" font-size="6.9" fill="#595959" text-anchor="middle">Sep</text>
<rect x="207.90" y="370.42" width="4.80" height="50.04" fill="#4f92d5" />
<rect x="207.90" y="420.45" width="4.80" height="52.08" fill="#3f70c6" />
<rect x="207.90" y="472.53" width="4.80" height="0.60" fill="#f2a263" />
<rect x="207.90" y="473.13" width="4.80" height="1.40" fill="#ffd050" />
<text x="210.30" y="502.00" font-size="6.9" fill="#595959" text-anchor="middle">Oct</text>
<rect x="223.00" y="368.52" width="4.80" height="50.96" fill="#4f92d5" />
<rect x="223.00" y="419.49" width="4.80" height="53.04" fill="#3f70c6" />
<rect x="223.00" y="472.53" width="4.80" height="0.60" fill="#f2a263" />
<rect x="223.00" y="473.13" width="4.80" height="1.40" fill="#ffd050" />
<text x="225.41" y="502.00" font-size="6.9" fill="#595959" text-anchor="middle">Nov</text>
<rect x="238.12" y="370.17" width="4.80" height="50.16" fill="#4f92d5" />
<rect x="238.12" y="420.33" width="4.80" height="52.20" fill="#3f70c6" />
<rect x="238.12" y="472.53" width="4.80" height="0.60" fill="#f2a263" />
<rect x="238.12" y="473.13" width="4.80" height="1.40" fill="#ffd050" />
<text x="240.52" y="502.00" font-size="6.9" fill="#595959" text-anchor="middle">Dec</text>
<rect x="253.23" y="385.07" width="4.80" height="42.85" fill="#4f92d5" />
<rect x="253.23" y="427.93" width="4.80" height="44.60" fill="#3f70c6" />
<rect x="253.23" y="472.53" width="4.80" height="0.60" fill="#f2a263" />
<rect x="253.23" y="473.13" width="4.80" height="1.40" fill="#ffd050" />
<text x="255.63" y="502.00" font-size="6.9" fill="#595959" text-anchor="middle">Jan</text>
<rect x="268.34" y="367.53" width="4.80" height="51.45" fill="#4f92d5" />
<rect x="268.34" y="418.98" width="4.80" height="53.55" fill="#3f70c6" />
<rect x="268.34" y="472.53" width="4.80" height="0.60" fill="#f2a263" />
<rect x="268.34" y="473.13" width="4.80" height="1.40" fill="#ffd050" />
<text x="270.74" y="502.00" font-size="6.9" fill="#595959" text-anchor="middle">Feb</text>
<rect x="283.45" y="379.06" width="4.80" height="45.80" fill="#4f92d5" />
<rect x="283.45" y="424.86" width="4.80" height="47.67" fill="#3f70c6" />
<rect x="283.45" y="472.53" width="4.80" height="0.60" fill="#f2a263" />
<rect x="283.45" y="473.13" width="4.80" height="1.40" fill="#ffd050" />
<text x="285.85" y="502.00" font-size="6.9" fill="#595959" text-anchor="middle">Mar</text>
<rect x="298.56" y="363.66" width="4.80" height="53.34" fill="#4f92d5" />
<rect x="298.56" y="417.01" width="4.80" height="55.52" fill="#3f70c6" />
<rect x="298.56" y="472.53" width="4.80" height="0.60" fill="#f2a263" />
<rect x="298.56" y="473.13" width="4.80" height="1.40" fill="#ffd050" />
<text x="300.96" y="502.00" font-size="6.9" fill="#595959" text-anchor="middle">Apr</text>
<rect x="313.67" y="377.99" width="4.80" height="46.32" fill="#4f92d5" />
<rect x="313.67" y="424.32" width="4.80" height="48.21" fill="#3f70c6" />
<rect x="313.67" y="472.53" width="4.80" height="0.60" fill="#f2a263" />
<rect x="313.67" y="473.13" width="4.80" height="1.40" fill="#ffd050" />
<text x="316.07" y="502.00" font-size="6.9" fill="#595959" text-anchor="middle">May</text>
<rect x="328.78" y="373.55" width="4.80" height="48.50" fill="#4f92d5" />
<rect x="328.78" y="422.05" width="4.80" height="50.48" fill="#3f70c6" />
<rect x="328.78" y="472.53" width="4.80" height="0.60" fill="#f2a263" />
<rect x="328.78" y="473.13" width="4.80" height="1.40" fill="#ffd050" />
<text x="331.18" y="502.00" font-size="6.9" fill="#595959" text-anchor="middle">Jun</text>
<rect x="343.89" y="375.36" width="4.80" height="47.61" fill="#4f92d5" />
<rect x="343.89" y="422.97" width="4.80" height="49.56" fill="#3f70c6" />
<rect x="343.89" y="472.53" width="4.80" height="0.60" fill="#f2a263" />
<rect x="343.89" y="473.13" width="4.80" height="1.40" fill="#ffd050" />
<text x="346.29" y="502.00" font-size="6.9" fill="#595959" text-anchor="middle">Jul</text>
<rect x="359.00" y="372.89" width="4.80" height="48.83" fill="#4f92d5" />
<rect x="359.00" y="421.71" width="4.80" height="50.82" fill="#3f70c6" />
<rect x="359.00" y="472.53" width="4.80" height="0.60" fill="#f2a263" />
<rect x="359.00" y="473.13" width="4.80" height="1.40" fill="#ffd050" />
<text x="361.40" y="502.00" font-size="6.9" fill="#595959" text-anchor="middle">Aug</text>
<rect x="374.11" y="370.42" width="4.80" height="50.04" fill="#4f92d5" />
<rect x="374.11" y="420.45" width="4.80" height="52.08" fill="#3f70c6" />
<rect x="374.11" y="472.53" width="4.80" height="0.60" fill="#f2a263" />
<rect x="374.11" y="473.13" width="4.80" height="1.40" fill="#ffd050" />
<text x="376.51" y="502.00" font-size="6.9" fill="#595959" text-anchor="middle">Sep</text>
<rect x="389.22" y="362.76" width="4.80" height="53.79" fill="#4f92d5" />
<rect x="389.22" y="416.55" width="4.80" height="55.98" fill="#3f70c6" />
<rect x="389.22" y="472.53" width="4.80" height="0.60" fill="#f2a263" />
<rect x="389.22" y="473.13" width="4.80" height="1.40" fill="#ffd050" />
<text x="391.62" y="502.00" font-size="6.9" fill="#595959" text-anchor="middle">Oct</text>
<rect x="404.33" y="362.43" width="4.80" height="53.95" fill="#4f92d5" />
<rect x="404.33" y="416.38" width="4.80" height="56.15" fill="#3f70c6" />
<rect x="404.33" y="472.53" width="4.80" height="0.60" fill="#f2a263" />
<rect x="404.33" y="473.13" width="4.80" height="1.40" fill="#ffd050" />
<text x="406.73" y="502.00" font-size="6.9" fill="#595959" text-anchor="middle">Nov</text>
<rect x="419.44" y="361.93" width="4.80" height="54.19" fill="#4f92d5" />
<rect x="419.44" y="416.13" width="4.80" height="56.40" fill="#3f70c6" />
<rect x="419.44" y="472.53" width="4.80" height="0.60" fill="#f2a263" />
<rect x="419.44" y="473.13" width="4.80" height="1.40" fill="#ffd050" />
<text x="421.84" y="502.00" font-size="6.9" fill="#595959" text-anchor="middle">Dec</text>
<rect x="434.55" y="367.86" width="4.80" height="51.29" fill="#4f92d5" />
<rect x="434.55" y="419.15" width="4.80" height="53.38" fill="#3f70c6" />
<rect x="434.55" y="472.53" width="4.80" height="0.60" fill="#f2a263" />
<rect x="434.55" y="473.13" width="4.80" height="1.40" fill="#ffd050" />
<text x="436.95" y="502.00" font-size="6.9" fill="#595959" text-anchor="middle">Jan</text>
<rect x="449.66" y="350.40" width="4.80" height="59.84" fill="#4f92d5" />
<rect x="449.66" y="410.25" width="4.80" height="62.28" fill="#3f70c6" />
<rect x="449.66" y="472.53" width="4.80" height="0.60" fill="#f2a263" />
<rect x="449.66" y="473.13" width="4.80" height="1.40" fill="#ffd050" />
<text x="452.06" y="502.00" font-size="6.9" fill="#595959" text-anchor="middle">Feb</text>
<rect x="464.77" y="365.06" width="4.80" height="52.66" fill="#4f92d5" />
<rect x="464.77" y="417.72" width="4.80" height="54.81" fill="#3f70c6" />
<rect x="464.77" y="472.53" width="4.80" height="0.60" fill="#f2a263" />
<rect x="464.77" y="473.13" width="4.80" height="1.40" fill="#ffd050" />
<text x="467.17" y="502.00" font-size="6.9" fill="#595959" text-anchor="middle">Mar</text>
<rect x="479.88" y="348.76" width="4.80" height="60.65" fill="#4f92d5" />
<rect x="479.88" y="409.41" width="4.80" height="63.12" fill="#3f70c6" />
<rect x="479.88" y="472.53" width="4.80" height="0.60" fill="#f2a263" />
<rect x="479.88" y="473.13" width="4.80" height="1.40" fill="#ffd050" />
<text x="482.28" y="502.00" font-size="6.9" fill="#595959" text-anchor="middle">Apr</text>
<rect x="494.99" y="363.66" width="4.80" height="53.34" fill="#4f92d5" />
<rect x="494.99" y="417.01" width="4.80" height="55.52" fill="#3f70c6" />
<rect x="494.99" y="472.53" width="4.80" height="0.60" fill="#f2a263" />
<rect x="494.99" y="473.13" width="4.80" height="1.40" fill="#ffd050" />
<text x="497.39" y="502.00" font-size="6.9" fill="#595959" text-anchor="middle">May</text>
<rect x="510.10" y="358.89" width="4.80" height="55.69" fill="#4f92d5" />
<rect x="510.10" y="414.57" width="4.80" height="57.96" fill="#3f70c6" />
<rect x="510.10" y="472.53" width="4.80" height="0.60" fill="#f2a263" />
<rect x="510.10" y="473.13" width="4.80" height="1.40" fill="#ffd050" />
<text x="512.50" y="502.00" font-size="6.9" fill="#595959" text-anchor="middle">Jun</text>
<rect x="525.21" y="361.11" width="4.80" height="54.60" fill="#4f92d5" />
<rect x="525.21" y="415.71" width="4.80" height="56.82" fill="#3f70c6" />
<rect x="525.21" y="472.53" width="4.80" height="0.60" fill="#f2a263" />
<rect x="525.21" y="473.13" width="4.80" height="1.40" fill="#ffd050" />
<text x="527.61" y="502.00" font-size="6.9" fill="#595959" text-anchor="middle">Jul</text>
<rect x="540.32" y="358.31" width="4.80" height="55.97" fill="#4f92d5" />
<rect x="540.32" y="414.28" width="4.80" height="58.25" fill="#3f70c6" />
<rect x="540.32" y="472.53" width="4.80" height="0.60" fill="#f2a263" />
<rect x="540.32" y="473.13" width="4.80" height="1.40" fill="#ffd050" />
<text x="542.72" y="502.00" font-size="6.9" fill="#595959" text-anchor="middle">Aug</text>
<rect x="555.43" y="355.51" width="4.80" height="57.34" fill="#4f92d5" />
<rect x="555.43" y="412.85" width="4.80" height="59.68" fill="#3f70c6" />
<rect x="555.43" y="472.53" width="4.80" height="0.60" fill="#f2a263" />
<rect x="555.43" y="473.13" width="4.80" height="1.40" fill="#ffd050" />
<text x="557.83" y="502.00" font-size="6.9" fill="#595959" text-anchor="middle">Sep</text>
<rect x="570.54" y="348.18" width="4.80" height="60.93" fill="#4f92d5" />
<rect x="570.54" y="409.11" width="4.80" height="63.42" fill="#3f70c6" />
<rect x="570.54" y="472.53" width="4.80" height="0.60" fill="#f2a263" />
<rect x="570.54" y="473.13" width="4.80" height="1.40" fill="#ffd050" />
<text x="572.94" y="502.00" font-size="6.9" fill="#595959" text-anchor="middle">Oct</text>
<rect x="585.65" y="347.36" width="4.80" height="61.33" fill="#4f92d5" />
<rect x="585.65" y="408.69" width="4.80" height="63.84" fill="#3f70c6" />
<rect x="585.65" y="472.53" width="4.80" height="0.60" fill="#f2a263" />
<rect x="585.65" y="473.13" width="4.80" height="1.40" fill="#ffd050" />
<text x="588.05" y="502.00" font-size="6.9" fill="#595959" text-anchor="middle">Nov</text>
<rect x="600.76" y="346.78" width="4.80" height="61.62" fill="#4f92d5" />
<rect x="600.76" y="408.40" width="4.80" height="64.13" fill="#3f70c6" />
<rect x="600.76" y="472.53" width="4.80" height="0.60" fill="#f2a263" />
<rect x="600.76" y="473.13" width="4.80" height="1.40" fill="#ffd050" />
<text x="603.16" y="502.00" font-size="6.9" fill="#595959" text-anchor="middle">Dec</text>
<rect x="615.87" y="379.72" width="4.80" height="45.48" fill="#4f92d5" />
<rect x="615.87" y="425.20" width="4.80" height="47.33" fill="#3f70c6" />
<rect x="615.87" y="472.53" width="4.80" height="0.60" fill="#f2a263" />
<rect x="615.87" y="473.13" width="4.80" height="1.40" fill="#ffd050" />
<text x="618.27" y="502.00" font-size="6.9" fill="#595959" text-anchor="middle">Jan</text>
<rect x="630.98" y="361.93" width="4.80" height="54.19" fill="#4f92d5" />
<rect x="630.98" y="416.13" width="4.80" height="56.40" fill="#3f70c6" />
<rect x="630.98" y="472.53" width="4.80" height="0.60" fill="#f2a263" />
<rect x="630.98" y="473.13" width="4.80" height="1.40" fill="#ffd050" />
<text x="633.38" y="502.00" font-size="6.9" fill="#595959" text-anchor="middle">Feb</text>
<rect x="646.09" y="372.97" width="4.80" height="48.78" fill="#4f92d5" />
<rect x="646.09" y="421.75" width="4.80" height="50.78" fill="#3f70c6" />
<rect x="646.09" y="472.53" width="4.80" height="0.60" fill="#f2a263" />
<rect x="646.09" y="473.13" width="4.80" height="1.40" fill="#ffd050" />
<text x="648.49" y="502.00" font-size="6.9" fill="#595959" text-anchor="middle">Mar</text>
<rect x="661.20" y="357.73" width="4.80" height="56.25" fill="#4f92d5" />
<rect x="661.20" y="413.98" width="4.80" height="58.55" fill="#3f70c6" />
<rect x="661.20" y="472.53" width="4.80" height="0.60" fill="#f2a263" />
<rect x="661.20" y="473.13" width="4.80" height="1.40" fill="#ffd050" />
<text x="663.60" y="502.00" font-size="6.9" fill="#595959" text-anchor="middle">Apr</text>
<rect x="676.31" y="371.24" width="4.80" height="49.63" fill="#4f92d5" />
<rect x="676.31" y="420.87" width="4.80" height="51.66" fill="#3f70c6" />
<rect x="676.31" y="472.53" width="4.80" height="0.60" fill="#f2a263" />
<rect x="676.31" y="473.13" width="4.80" height="1.40" fill="#ffd050" />
<text x="678.71" y="502.00" font-size="6.9" fill="#595959" text-anchor="middle">May</text>
<rect x="691.42" y="367.29" width="4.80" height="51.57" fill="#4f92d5" />
<rect x="691.42" y="418.86" width="4.80" height="53.67" fill="#3f70c6" />
<rect x="691.42" y="472.53" width="4.80" height="0.60" fill="#f2a263" />
<rect x="691.42" y="473.13" width="4.80" height="1.40" fill="#ffd050" />
<text x="693.82" y="502.00" font-size="6.9" fill="#595959" text-anchor="middle">Jun</text>
<rect x="706.53" y="370.25" width="4.80" height="50.12" fill="#4f92d5" />
<rect x="706.53" y="420.37" width="4.80" height="52.16" fill="#3f70c6" />
<rect x="706.53" y="472.53" width="4.80" height="0.60" fill="#f2a263" />
<rect x="706.53" y="473.13" width="4.80" height="1.40" fill="#ffd050" />
<text x="708.93" y="502.00" font-size="6.9" fill="#595959" text-anchor="middle">Jul</text>
<rect x="721.64" y="365.89" width="4.80" height="52.26" fill="#4f92d5" />
<rect x="721.64" y="418.14" width="4.80" height="54.39" fill="#3f70c6" />
<rect x="721.64" y="472.53" width="4.80" height="0.60" fill="#f2a263" />
<rect x="721.64" y="473.13" width="4.80" height="1.40" fill="#ffd050" />
<text x="724.04" y="502.00" font-size="6.9" fill="#595959" text-anchor="middle">Aug</text>
<rect x="736.75" y="364.73" width="4.80" height="52.82" fill="#4f92d5" />
<rect x="736.75" y="417.55" width="4.80" height="54.98" fill="#3f70c6" />
<rect x="736.75" y="472.53" width="4.80" height="0.60" fill="#f2a263" />
<rect x="736.75" y="473.13" width="4.80" height="1.40" fill="#ffd050" />
<text x="739.15" y="502.00" font-size="6.9" fill="#595959" text-anchor="middle">Sep</text>
<rect x="751.86" y="356.83" width="4.80" height="56.69" fill="#4f92d5" />
<rect x="751.86" y="413.52" width="4.80" height="59.01" fill="#3f70c6" />
<rect x="751.86" y="472.53" width="4.80" height="0.60" fill="#f2a263" />
<rect x="751.86" y="473.13" width="4.80" height="1.40" fill="#ffd050" />
<text x="754.26" y="502.00" font-size="6.9" fill="#595959" text-anchor="middle">Oct</text>
<rect x="766.97" y="355.43" width="4.80" height="57.38" fill="#4f92d5" />
<rect x="766.97" y="412.81" width="4.80" height="59.72" fill="#3f70c6" />
<rect x="766.97" y="472.53" width="4.80" height="0.60" fill="#f2a263" />
<rect x="766.97" y="473.13" width="4.80" height="1.40" fill="#ffd050" />
<text x="769.37" y="502.00" font-size="6.9" fill="#595959" text-anchor="middle">Nov</text>
<rect x="782.08" y="354.85" width="4.80" height="57.66" fill="#4f92d5" />
<rect x="782.08" y="412.51" width="4.80" height="60.02" fill="#3f70c6" />
<rect x="782.08" y="472.53" width="4.80" height="0.60" fill="#f2a263" />
<rect x="782.08" y="473.13" width="4.80" height="1.40" fill="#ffd050" />
<text x="784.48" y="502.00" font-size="6.9" fill="#595959" text-anchor="middle">Dec</text>
<rect x="797.19" y="370.83" width="4.80" height="49.83" fill="#4f92d5" />
<rect x="797.19" y="420.66" width="4.80" height="51.87" fill="#3f70c6" />
<rect x="797.19" y="472.53" width="4.80" height="0.60" fill="#f2a263" />
<rect x="797.19" y="473.13" width="4.80" height="1.40" fill="#ffd050" />
<text x="799.59" y="502.00" font-size="6.9" fill="#595959" text-anchor="middle">Jan</text>
<rect x="812.30" y="354.28" width="4.80" height="57.94" fill="#4f92d5" />
<rect x="812.30" y="412.22" width="4.80" height="60.31" fill="#3f70c6" />
<rect x="812.30" y="472.53" width="4.80" height="0.60" fill="#f2a263" />
<rect x="812.30" y="473.13" width="4.80" height="1.40" fill="#ffd050" />
<text x="814.70" y="502.00" font-size="6.9" fill="#595959" text-anchor="middle">Feb</text>
<rect x="827.41" y="364.16" width="4.80" height="53.10" fill="#4f92d5" />
<rect x="827.41" y="417.26" width="4.80" height="55.27" fill="#3f70c6" />
<rect x="827.41" y="472.53" width="4.80" height="0.60" fill="#f2a263" />
<rect x="827.41" y="473.13" width="4.80" height="1.40" fill="#ffd050" />
<text x="829.81" y="502.00" font-size="6.9" fill="#595959" text-anchor="middle">Mar</text>
<rect x="842.52" y="349.66" width="4.80" height="60.20" fill="#4f92d5" />
<rect x="842.52" y="409.87" width="4.80" height="62.66" fill="#3f70c6" />
<rect x="842.52" y="472.53" width="4.80" height="0.60" fill="#f2a263" />
<rect x="842.52" y="473.13" width="4.80" height="1.40" fill="#ffd050" />
<text x="844.92" y="502.00" font-size="6.9" fill="#595959" text-anchor="middle">Apr</text>
<rect x="857.63" y="363.25" width="4.80" height="53.55" fill="#4f92d5" />
<rect x="857.63" y="416.80" width="4.80" height="55.73" fill="#3f70c6" />
<rect x="857.63" y="472.53" width="4.80" height="0.60" fill="#f2a263" />
<rect x="857.63" y="473.13" width="4.80" height="1.40" fill="#ffd050" />
<text x="860.03" y="502.00" font-size="6.9" fill="#595959" text-anchor="middle">May</text>
<rect x="872.74" y="358.31" width="4.80" height="55.97" fill="#4f92d5" />
<rect x="872.74" y="414.28" width="4.80" height="58.25" fill="#3f70c6" />
<rect x="872.74" y="472.53" width="4.80" height="0.60" fill="#f2a263" />
<rect x="872.74" y="473.13" width="4.80" height="1.40" fill="#ffd050" />
<text x="875.14" y="502.00" font-size="6.9" fill="#595959" text-anchor="middle">Jun</text>
<rect x="887.85" y="361.19" width="4.80" height="54.56" fill="#4f92d5" />
<rect x="887.85" y="415.75" width="4.80" height="56.78" fill="#3f70c6" />
<rect x="887.85" y="472.53" width="4.80" height="0.60" fill="#f2a263" />
<rect x="887.85" y="473.13" width="4.80" height="1.40" fill="#ffd050" />
<text x="890.25" y="502.00" font-size="6.9" fill="#595959" text-anchor="middle">Jul</text>
<rect x="902.96" y="357.40" width="4.80" height="56.41" fill="#4f92d5" />
<rect x="902.96" y="413.82" width="4.80" height="58.71" fill="#3f70c6" />
<rect x="902.96" y="472.53" width="4.80" height="0.60" fill="#f2a263" />
<rect x="902.96" y="473.13" width="4.80" height="1.40" fill="#ffd050" />
<text x="905.36" y="502.00" font-size="6.9" fill="#595959" text-anchor="middle">Aug</text>
<rect x="918.07" y="355.43" width="4.80" height="57.38" fill="#4f92d5" />
<rect x="918.07" y="412.81" width="4.80" height="59.72" fill="#3f70c6" />
<rect x="918.07" y="472.53" width="4.80" height="0.60" fill="#f2a263" />
<rect x="918.07" y="473.13" width="4.80" height="1.40" fill="#ffd050" />
<text x="920.47" y="502.00" font-size="6.9" fill="#595959" text-anchor="middle">Sep</text>
<rect x="933.18" y="347.61" width="4.80" height="61.21" fill="#4f92d5" />
<rect x="933.18" y="408.82" width="4.80" height="63.71" fill="#3f70c6" />
<rect x="933.18" y="472.53" width="4.80" height="0.60" fill="#f2a263" />
<rect x="933.18" y="473.13" width="4.80" height="1.40" fill="#ffd050" />
<text x="935.58" y="502.00" font-size="6.9" fill="#595959" text-anchor="middle">Oct</text>
<rect x="948.29" y="346.12" width="4.80" height="61.94" fill="#4f92d5" />
<rect x="948.29" y="408.06" width="4.80" height="64.47" fill="#3f70c6" />
<rect x="948.29" y="472.53" width="4.80" height="0.60" fill="#f2a263" />
<rect x="948.29" y="473.13" width="4.80" height="1.40" fill="#ffd050" />
<text x="950.69" y="502.00" font-size="6.9" fill="#595959" text-anchor="middle">Nov</text>
<rect x="963.40" y="345.55" width="4.80" height="62.22" fill="#4f92d5" />
<rect x="963.40" y="407.77" width="4.80" height="64.76" fill="#3f70c6" />
<rect x="963.40" y="472.53" width="4.80" height="0.60" fill="#f2a263" />
<rect x="963.40" y="473.13" width="4.80" height="1.40" fill="#ffd050" />
<text x="965.80" y="502.00" font-size="6.9" fill="#595959" text-anchor="middle">Dec</text>
<rect x="335.00" y="515.20" width="3.60" height="3.60" fill="#3f70c6" />
<text x="341.30" y="519.00" font-size="6.9" fill="#595959" textLength="26.70" lengthAdjust="spacingAndGlyphs">Revenue</text>
<rect x="381.20" y="515.20" width="3.60" height="3.60" fill="#ed7d31" />
<text x="387.50" y="519.00" font-size="6.9" fill="#595959" textLength="35.50" lengthAdjust="spacingAndGlyphs">Total COGS</text>
<rect x="435.20" y="515.20" width="3.60" height="3.60" fill="#a5a5a5" />
<text x="441.80" y="519.00" font-size="6.9" fill="#595959" textLength="74.50" lengthAdjust="spacingAndGlyphs">Total Variable Expenses</text>
<rect x="529.50" y="515.20" width="3.60" height="3.60" fill="#ffc000" />
<text x="535.80" y="519.00" font-size="6.9" fill="#595959" textLength="95.70" lengthAdjust="spacingAndGlyphs">Total Admin Salary and Wages</text>
<rect x="644.20" y="515.20" width="3.60" height="3.60" fill="#4f92d5" />
<text x="651.00" y="519.00" font-size="6.9" fill="#595959" textLength="22.50" lengthAdjust="spacingAndGlyphs">EBITDA</text>
<rect x="22.50" y="531.00" width="458.70" height="69.00" fill="#ffffff" stroke="#dadada" stroke-width="0.7"/>
<rect x="483.50" y="531.00" width="500.00" height="69.00" fill="#ffffff" stroke="#dadada" stroke-width="0.7"/>
<text x="200.00" y="549.00" font-size="11.6" fill="#595959" textLength="104.00" lengthAdjust="spacingAndGlyphs">Key KPI's 2026 - 2027</text>
<text x="676.80" y="549.00" font-size="11.6" fill="#595959" textLength="110.20" lengthAdjust="spacingAndGlyphs">Cash Flow 2026 - 2027</text>
<rect x="987.40" y="49.60" width="12.60" height="509.40" fill="#f1f1f1" />
<rect x="991.3" y="62" width="5.6" height="239.5" rx="2.8" fill="#6e6e6e"/>
<path d="M991.2 58.6 L994.1 55 L997 58.6 Z" fill="#606060"/>
<path d="M991.2 551.8 L994.1 555.4 L997 551.8 Z" fill="#606060"/>
<rect x="0.00" y="49.60" width="987.40" height="13.80" fill="#e6e6e6" />
<rect x="0.00" y="49.60" width="987.40" height="2.00" fill="#efefef" />
<rect x="0.00" y="63.40" width="17.30" height="495.60" fill="#eeeeee" />
<line x1="0.00" y1="63.40" x2="987.40" y2="63.40" stroke="#c9c9c9" stroke-width="0.7" />
<line x1="17.30" y1="63.40" x2="17.30" y2="559.00" stroke="#c9c9c9" stroke-width="0.7" />
<path d="M15.6 54.6 L15.6 61.2 L9 61.2 Z" fill="#b4b4b4"/>
<text x="20.20" y="60.00" font-size="8.8" fill="#333333" text-anchor="middle">A</text>
<line x1="22.80" y1="52.50" x2="22.80" y2="63.40" stroke="#bcbcbc" stroke-width="0.8" />
<text x="43.65" y="60.00" font-size="8.8" fill="#333333" text-anchor="middle">B</text>
<line x1="64.50" y1="52.50" x2="64.50" y2="63.40" stroke="#bcbcbc" stroke-width="0.8" />
<text x="85.35" y="60.00" font-size="8.8" fill="#333333" text-anchor="middle">C</text>
<line x1="106.20" y1="52.50" x2="106.20" y2="63.40" stroke="#bcbcbc" stroke-width="0.8" />
<text x="127.05" y="60.00" font-size="8.8" fill="#333333" text-anchor="middle">D</text>
<line x1="147.90" y1="52.50" x2="147.90" y2="63.40" stroke="#bcbcbc" stroke-width="0.8" />
<text x="168.75" y="60.00" font-size="8.8" fill="#333333" text-anchor="middle">E</text>
<line x1="189.60" y1="52.50" x2="189.60" y2="63.40" stroke="#bcbcbc" stroke-width="0.8" />
<text x="210.45" y="60.00" font-size="8.8" fill="#333333" text-anchor="middle">F</text>
<line x1="231.30" y1="52.50" x2="231.30" y2="63.40" stroke="#bcbcbc" stroke-width="0.8" />
<text x="252.15" y="60.00" font-size="8.8" fill="#333333" text-anchor="middle">G</text>
<line x1="273.00" y1="52.50" x2="273.00" y2="63.40" stroke="#bcbcbc" stroke-width="0.8" />
<text x="293.85" y="60.00" font-size="8.8" fill="#333333" text-anchor="middle">H</text>
<line x1="314.70" y1="52.50" x2="314.70" y2="63.40" stroke="#bcbcbc" stroke-width="0.8" />
<text x="335.55" y="60.00" font-size="8.8" fill="#333333" text-anchor="middle">I</text>
<line x1="356.40" y1="52.50" x2="356.40" y2="63.40" stroke="#bcbcbc" stroke-width="0.8" />
<text x="377.25" y="60.00" font-size="8.8" fill="#333333" text-anchor="middle">J</text>
<line x1="398.10" y1="52.50" x2="398.10" y2="63.40" stroke="#bcbcbc" stroke-width="0.8" />
<text x="418.95" y="60.00" font-size="8.8" fill="#333333" text-anchor="middle">K</text>
<line x1="439.80" y1="52.50" x2="439.80" y2="63.40" stroke="#bcbcbc" stroke-width="0.8" />
<text x="460.65" y="60.00" font-size="8.8" fill="#333333" text-anchor="middle">L</text>
<line x1="481.50" y1="52.50" x2="481.50" y2="63.40" stroke="#bcbcbc" stroke-width="0.8" />
<text x="502.35" y="60.00" font-size="8.8" fill="#333333" text-anchor="middle">M</text>
<line x1="523.20" y1="52.50" x2="523.20" y2="63.40" stroke="#bcbcbc" stroke-width="0.8" />
<text x="544.05" y="60.00" font-size="8.8" fill="#333333" text-anchor="middle">N</text>
<line x1="564.90" y1="52.50" x2="564.90" y2="63.40" stroke="#bcbcbc" stroke-width="0.8" />
<text x="585.75" y="60.00" font-size="8.8" fill="#333333" text-anchor="middle">O</text>
<line x1="606.60" y1="52.50" x2="606.60" y2="63.40" stroke="#bcbcbc" stroke-width="0.8" />
<text x="627.45" y="60.00" font-size="8.8" fill="#333333" text-anchor="middle">P</text>
<line x1="648.30" y1="52.50" x2="648.30" y2="63.40" stroke="#bcbcbc" stroke-width="0.8" />
<text x="669.15" y="60.00" font-size="8.8" fill="#333333" text-anchor="middle">Q</text>
<line x1="690.00" y1="52.50" x2="690.00" y2="63.40" stroke="#bcbcbc" stroke-width="0.8" />
<text x="710.85" y="60.00" font-size="8.8" fill="#333333" text-anchor="middle">R</text>
<line x1="731.70" y1="52.50" x2="731.70" y2="63.40" stroke="#bcbcbc" stroke-width="0.8" />
<text x="752.55" y="60.00" font-size="8.8" fill="#333333" text-anchor="middle">S</text>
<line x1="773.40" y1="52.50" x2="773.40" y2="63.40" stroke="#bcbcbc" stroke-width="0.8" />
<text x="794.25" y="60.00" font-size="8.8" fill="#333333" text-anchor="middle">T</text>
<line x1="815.10" y1="52.50" x2="815.10" y2="63.40" stroke="#bcbcbc" stroke-width="0.8" />
<text x="835.95" y="60.00" font-size="8.8" fill="#333333" text-anchor="middle">U</text>
<line x1="856.80" y1="52.50" x2="856.80" y2="63.40" stroke="#bcbcbc" stroke-width="0.8" />
<text x="877.65" y="60.00" font-size="8.8" fill="#333333" text-anchor="middle">V</text>
<line x1="898.50" y1="52.50" x2="898.50" y2="63.40" stroke="#bcbcbc" stroke-width="0.8" />
<text x="919.35" y="60.00" font-size="8.8" fill="#333333" text-anchor="middle">W</text>
<line x1="940.20" y1="52.50" x2="940.20" y2="63.40" stroke="#bcbcbc" stroke-width="0.8" />
<text x="961.05" y="60.00" font-size="8.8" fill="#333333" text-anchor="middle">X</text>
<line x1="981.90" y1="52.50" x2="981.90" y2="63.40" stroke="#bcbcbc" stroke-width="0.8" />
<line x1="0.00" y1="67.95" x2="17.30" y2="67.95" stroke="#cdcdcd" stroke-width="0.6" />
<text x="6.58" y="78.00" font-size="9.0" fill="#333333" textLength="4.45" lengthAdjust="spacingAndGlyphs">2</text>
<line x1="0.00" y1="80.45" x2="17.30" y2="80.45" stroke="#cdcdcd" stroke-width="0.6" />
<text x="6.58" y="90.00" font-size="9.0" fill="#333333" textLength="4.45" lengthAdjust="spacingAndGlyphs">3</text>
<line x1="0.00" y1="92.95" x2="17.30" y2="92.95" stroke="#cdcdcd" stroke-width="0.6" />
<text x="6.58" y="103.00" font-size="9.0" fill="#333333" textLength="4.45" lengthAdjust="spacingAndGlyphs">4</text>
<line x1="0.00" y1="105.45" x2="17.30" y2="105.45" stroke="#cdcdcd" stroke-width="0.6" />
<text x="6.58" y="115.00" font-size="9.0" fill="#333333" textLength="4.45" lengthAdjust="spacingAndGlyphs">5</text>
<line x1="0.00" y1="117.95" x2="17.30" y2="117.95" stroke="#cdcdcd" stroke-width="0.6" />
<text x="6.58" y="128.00" font-size="9.0" fill="#333333" textLength="4.45" lengthAdjust="spacingAndGlyphs">6</text>
<line x1="0.00" y1="130.45" x2="17.30" y2="130.45" stroke="#cdcdcd" stroke-width="0.6" />
<text x="6.58" y="140.00" font-size="9.0" fill="#333333" textLength="4.45" lengthAdjust="spacingAndGlyphs">7</text>
<line x1="0.00" y1="142.95" x2="17.30" y2="142.95" stroke="#cdcdcd" stroke-width="0.6" />
<text x="6.58" y="153.00" font-size="9.0" fill="#333333" textLength="4.45" lengthAdjust="spacingAndGlyphs">8</text>
<line x1="0.00" y1="155.45" x2="17.30" y2="155.45" stroke="#cdcdcd" stroke-width="0.6" />
<text x="6.58" y="165.00" font-size="9.0" fill="#333333" textLength="4.45" lengthAdjust="spacingAndGlyphs">9</text>
<line x1="0.00" y1="167.95" x2="17.30" y2="167.95" stroke="#cdcdcd" stroke-width="0.6" />
<text x="4.35" y="178.00" font-size="9.0" fill="#333333" textLength="8.90" lengthAdjust="spacingAndGlyphs">10</text>
<line x1="0.00" y1="180.45" x2="17.30" y2="180.45" stroke="#cdcdcd" stroke-width="0.6" />
<text x="4.35" y="190.00" font-size="9.0" fill="#333333" textLength="8.90" lengthAdjust="spacingAndGlyphs">11</text>
<line x1="0.00" y1="192.95" x2="17.30" y2="192.95" stroke="#cdcdcd" stroke-width="0.6" />
<text x="4.35" y="203.00" font-size="9.0" fill="#333333" textLength="8.90" lengthAdjust="spacingAndGlyphs">12</text>
<line x1="0.00" y1="205.45" x2="17.30" y2="205.45" stroke="#cdcdcd" stroke-width="0.6" />
<text x="4.35" y="215.00" font-size="9.0" fill="#333333" textLength="8.90" lengthAdjust="spacingAndGlyphs">13</text>
<line x1="0.00" y1="217.95" x2="17.30" y2="217.95" stroke="#cdcdcd" stroke-width="0.6" />
<text x="4.35" y="228.00" font-size="9.0" fill="#333333" textLength="8.90" lengthAdjust="spacingAndGlyphs">14</text>
<line x1="0.00" y1="230.45" x2="17.30" y2="230.45" stroke="#cdcdcd" stroke-width="0.6" />
<text x="4.35" y="240.00" font-size="9.0" fill="#333333" textLength="8.90" lengthAdjust="spacingAndGlyphs">15</text>
<line x1="0.00" y1="242.95" x2="17.30" y2="242.95" stroke="#cdcdcd" stroke-width="0.6" />
<text x="4.35" y="253.00" font-size="9.0" fill="#333333" textLength="8.90" lengthAdjust="spacingAndGlyphs">16</text>
<line x1="0.00" y1="255.45" x2="17.30" y2="255.45" stroke="#cdcdcd" stroke-width="0.6" />
<text x="4.35" y="265.00" font-size="9.0" fill="#333333" textLength="8.90" lengthAdjust="spacingAndGlyphs">17</text>
<line x1="0.00" y1="267.95" x2="17.30" y2="267.95" stroke="#cdcdcd" stroke-width="0.6" />
<text x="4.35" y="278.00" font-size="9.0" fill="#333333" textLength="8.90" lengthAdjust="spacingAndGlyphs">18</text>
<line x1="0.00" y1="280.45" x2="17.30" y2="280.45" stroke="#cdcdcd" stroke-width="0.6" />
<text x="4.35" y="290.00" font-size="9.0" fill="#333333" textLength="8.90" lengthAdjust="spacingAndGlyphs">19</text>
<line x1="0.00" y1="292.95" x2="17.30" y2="292.95" stroke="#cdcdcd" stroke-width="0.6" />
<text x="4.35" y="303.00" font-size="9.0" fill="#333333" textLength="8.90" lengthAdjust="spacingAndGlyphs">20</text>
<line x1="0.00" y1="305.45" x2="17.30" y2="305.45" stroke="#cdcdcd" stroke-width="0.6" />
<text x="4.35" y="315.00" font-size="9.0" fill="#333333" textLength="8.90" lengthAdjust="spacingAndGlyphs">21</text>
<line x1="0.00" y1="317.95" x2="17.30" y2="317.95" stroke="#cdcdcd" stroke-width="0.6" />
<text x="4.35" y="328.00" font-size="9.0" fill="#333333" textLength="8.90" lengthAdjust="spacingAndGlyphs">22</text>
<line x1="0.00" y1="330.45" x2="17.30" y2="330.45" stroke="#cdcdcd" stroke-width="0.6" />
<text x="4.35" y="340.00" font-size="9.0" fill="#333333" textLength="8.90" lengthAdjust="spacingAndGlyphs">23</text>
<line x1="0.00" y1="342.95" x2="17.30" y2="342.95" stroke="#cdcdcd" stroke-width="0.6" />
<text x="4.35" y="353.00" font-size="9.0" fill="#333333" textLength="8.90" lengthAdjust="spacingAndGlyphs">24</text>
<line x1="0.00" y1="355.45" x2="17.30" y2="355.45" stroke="#cdcdcd" stroke-width="0.6" />
<text x="4.35" y="365.00" font-size="9.0" fill="#333333" textLength="8.90" lengthAdjust="spacingAndGlyphs">25</text>
<line x1="0.00" y1="367.95" x2="17.30" y2="367.95" stroke="#cdcdcd" stroke-width="0.6" />
<text x="4.35" y="378.00" font-size="9.0" fill="#333333" textLength="8.90" lengthAdjust="spacingAndGlyphs">26</text>
<line x1="0.00" y1="380.45" x2="17.30" y2="380.45" stroke="#cdcdcd" stroke-width="0.6" />
<text x="4.35" y="390.00" font-size="9.0" fill="#333333" textLength="8.90" lengthAdjust="spacingAndGlyphs">27</text>
<line x1="0.00" y1="392.95" x2="17.30" y2="392.95" stroke="#cdcdcd" stroke-width="0.6" />
<text x="4.35" y="403.00" font-size="9.0" fill="#333333" textLength="8.90" lengthAdjust="spacingAndGlyphs">28</text>
<line x1="0.00" y1="405.45" x2="17.30" y2="405.45" stroke="#cdcdcd" stroke-width="0.6" />
<text x="4.35" y="415.00" font-size="9.0" fill="#333333" textLength="8.90" lengthAdjust="spacingAndGlyphs">29</text>
<line x1="0.00" y1="417.95" x2="17.30" y2="417.95" stroke="#cdcdcd" stroke-width="0.6" />
<text x="4.35" y="428.00" font-size="9.0" fill="#333333" textLength="8.90" lengthAdjust="spacingAndGlyphs">30</text>
<line x1="0.00" y1="430.45" x2="17.30" y2="430.45" stroke="#cdcdcd" stroke-width="0.6" />
<text x="4.35" y="440.00" font-size="9.0" fill="#333333" textLength="8.90" lengthAdjust="spacingAndGlyphs">31</text>
<line x1="0.00" y1="442.95" x2="17.30" y2="442.95" stroke="#cdcdcd" stroke-width="0.6" />
<text x="4.35" y="453.00" font-size="9.0" fill="#333333" textLength="8.90" lengthAdjust="spacingAndGlyphs">32</text>
<line x1="0.00" y1="455.45" x2="17.30" y2="455.45" stroke="#cdcdcd" stroke-width="0.6" />
<text x="4.35" y="465.00" font-size="9.0" fill="#333333" textLength="8.90" lengthAdjust="spacingAndGlyphs">33</text>
<line x1="0.00" y1="467.95" x2="17.30" y2="467.95" stroke="#cdcdcd" stroke-width="0.6" />
<text x="4.35" y="478.00" font-size="9.0" fill="#333333" textLength="8.90" lengthAdjust="spacingAndGlyphs">34</text>
<line x1="0.00" y1="480.45" x2="17.30" y2="480.45" stroke="#cdcdcd" stroke-width="0.6" />
<text x="4.35" y="490.00" font-size="9.0" fill="#333333" textLength="8.90" lengthAdjust="spacingAndGlyphs">35</text>
<line x1="0.00" y1="492.95" x2="17.30" y2="492.95" stroke="#cdcdcd" stroke-width="0.6" />
<text x="4.35" y="503.00" font-size="9.0" fill="#333333" textLength="8.90" lengthAdjust="spacingAndGlyphs">36</text>
<line x1="0.00" y1="505.45" x2="17.30" y2="505.45" stroke="#cdcdcd" stroke-width="0.6" />
<text x="4.35" y="515.00" font-size="9.0" fill="#333333" textLength="8.90" lengthAdjust="spacingAndGlyphs">37</text>
<line x1="0.00" y1="517.95" x2="17.30" y2="517.95" stroke="#cdcdcd" stroke-width="0.6" />
<text x="4.35" y="528.00" font-size="9.0" fill="#333333" textLength="8.90" lengthAdjust="spacingAndGlyphs">38</text>
<line x1="0.00" y1="530.45" x2="17.30" y2="530.45" stroke="#cdcdcd" stroke-width="0.6" />
<text x="4.35" y="540.00" font-size="9.0" fill="#333333" textLength="8.90" lengthAdjust="spacingAndGlyphs">39</text>
<line x1="0.00" y1="542.95" x2="17.30" y2="542.95" stroke="#cdcdcd" stroke-width="0.6" />
<text x="4.35" y="553.00" font-size="9.0" fill="#333333" textLength="8.90" lengthAdjust="spacingAndGlyphs">40</text>
<line x1="0.00" y1="555.45" x2="17.30" y2="555.45" stroke="#cdcdcd" stroke-width="0.6" />
<rect x="0.00" y="0.00" width="1000.00" height="31.30" fill="#107c41" />
<rect x="0.00" y="0.00" width="1000.00" height="1.40" fill="#1a8149" />
<rect x="385.7" y="5.1" width="240.4" height="20.1" rx="1.2" fill="#cfe7d8"/>
<circle cx="401.3" cy="13.4" r="2.8" fill="none" stroke="#2f6e4c" stroke-width="0.9"/>
<line x1="399.2" y1="15.6" x2="395.4" y2="19.6" stroke="#2f6e4c" stroke-width="0.9"/>
<text x="413.20" y="18.00" font-size="9.2" fill="#2f6346" textLength="26.20" lengthAdjust="spacingAndGlyphs">Search</text>
<text x="116.50" y="19.00" font-size="8.2" fill="#ffffff" textLength="191.50" lengthAdjust="spacingAndGlyphs">SaaS Software Financial Model with MRR 6.xlsx  -  Excel</text>
<g fill="none" stroke="#ffffff" stroke-width="1"><rect x="14.2" y="11.2" width="6.6" height="9"/><line x1="14.2" y1="14.2" x2="20.8" y2="14.2"/><line x1="14.2" y1="17.2" x2="20.8" y2="17.2"/><line x1="17.6" y1="11.2" x2="17.6" y2="20.2"/></g>
<rect x="10" y="12" width="6.6" height="7.4" fill="#ffffff"/>
<text x="13.30" y="18.00" font-size="6.6" fill="#107c41" text-anchor="middle" font-weight="bold">X</text>
<g fill="none" stroke="#ffffff" stroke-width="1"><rect x="31" y="10.8" width="10.4" height="9.6" rx="0.8"/><rect x="33.4" y="10.8" width="5.6" height="3.4"/><rect x="33.4" y="16.4" width="5.6" height="4"/></g>
<g fill="none" stroke="#4fa076" stroke-width="1"><path d="M50.5 14 H55 a3 3 0 0 1 0 6 H53"/><path d="M52.6 11.6 L50.2 14 L52.6 16.4"/><path d="M82.6 14 H78.1 a3 3 0 0 0 0 6 H80.1"/><path d="M80.5 11.6 L82.9 14 L80.5 16.4"/></g>
<path d="M62.6 14.8 h3.2 l-1.6 1.8 Z M90.8 14.8 h3.2 l-1.6 1.8 Z" fill="#4fa076"/>
<path d="M101.6 14.2 h5 M102 16.2 h4.2 l-2.1 2.4 Z" stroke="#ffffff" stroke-width="0.8" fill="#ffffff"/>
<circle cx="891.6" cy="15.5" r="7.1" fill="#6a8f1a"/>
<text x="891.60" y="18.00" font-size="5.6" fill="#e8efc4" text-anchor="middle">RS</text>
<line x1="918.40" y1="15.00" x2="926.20" y2="15.00" stroke="#ffffff" stroke-width="0.9" />
<g fill="none" stroke="#ffffff" stroke-width="0.9"><rect x="949.8" y="13.4" width="5.8" height="5.8" rx="0.8"/><path d="M951.6 13.2 v-1.4 h5.8 v5.8 h-1.6"/></g>
<path d="M981.5 11.7 L989.1 19.3 M989.1 11.7 L981.5 19.3" stroke="#ffffff" stroke-width="1"/>
<rect x="0.00" y="31.30" width="1000.00" height="18.30" fill="#e9ecf1" />
<text x="14.00" y="45.00" font-size="9.2" fill="#2f2f2f" textLength="13.00" lengthAdjust="spacingAndGlyphs">File</text>
<text x="44.00" y="45.00" font-size="9.2" fill="#2f2f2f" textLength="23.50" lengthAdjust="spacingAndGlyphs">Home</text>
<text x="80.00" y="45.00" font-size="9.2" fill="#2f2f2f" textLength="23.00" lengthAdjust="spacingAndGlyphs">Insert</text>
<text x="114.50" y="45.00" font-size="9.2" fill="#2f2f2f" textLength="21.00" lengthAdjust="spacingAndGlyphs">Draw</text>
<text x="148.00" y="45.00" font-size="9.2" fill="#2f2f2f" textLength="48.50" lengthAdjust="spacingAndGlyphs">Page Layout</text>
<text x="209.00" y="45.00" font-size="9.2" fill="#2f2f2f" textLength="36.50" lengthAdjust="spacingAndGlyphs">Formulas</text>
<text x="257.00" y="45.00" font-size="9.2" fill="#2f2f2f" textLength="19.50" lengthAdjust="spacingAndGlyphs">Data</text>
<text x="288.50" y="45.00" font-size="9.2" fill="#2f2f2f" textLength="27.50" lengthAdjust="spacingAndGlyphs">Review</text>
<text x="328.50" y="45.00" font-size="9.2" fill="#2f2f2f" textLength="19.50" lengthAdjust="spacingAndGlyphs">View</text>
<text x="360.00" y="45.00" font-size="9.2" fill="#2f2f2f" textLength="40.50" lengthAdjust="spacingAndGlyphs">Developer</text>
<text x="412.00" y="45.00" font-size="9.2" fill="#2f2f2f" textLength="19.00" lengthAdjust="spacingAndGlyphs">Help</text>
<text x="443.50" y="45.00" font-size="9.2" fill="#2f2f2f" textLength="31.50" lengthAdjust="spacingAndGlyphs">Acrobat</text>
<text x="487.00" y="45.00" font-size="9.2" fill="#2f2f2f" textLength="46.50" lengthAdjust="spacingAndGlyphs">Power Pivot</text>
<rect x="946.6" y="33.5" width="46" height="15.2" rx="1.6" fill="#107c41"/>
<g fill="none" stroke="#ffffff" stroke-width="0.8"><path d="M949.8 41.4 v3.4 h6.6 v-3.4"/><path d="M953.1 43.2 v-6 M951 39 l2.1 -2.2 l2.1 2.2"/></g>
<text x="960.00" y="45.00" font-size="9.4" fill="#ffffff" textLength="22.00" lengthAdjust="spacingAndGlyphs" font-weight="bold">Share</text>
<path d="M985.8 40.4 l2.1 2.1 l2.1 -2.1" fill="none" stroke="#ffffff" stroke-width="1"/>
<rect x="0.00" y="559.00" width="1000.00" height="20.50" fill="#e4e8ed" />
<path d="M20.4 565.8 L17.2 568.9 L20.4 572" fill="none" stroke="#5c5c5c" stroke-width="1.1"/>
<path d="M37.8 565.8 L41 568.9 L37.8 572" fill="none" stroke="#5c5c5c" stroke-width="1.1"/>
<circle cx="57.8" cy="568.8" r="0.8" fill="#333333"/>
<circle cx="60.2" cy="568.8" r="0.8" fill="#333333"/>
<circle cx="62.6" cy="568.8" r="0.8" fill="#333333"/>
<text x="79.50" y="573.00" font-size="9.4" fill="#333333" textLength="28.50" lengthAdjust="spacingAndGlyphs">IS 2029</text>
<text x="125.00" y="573.00" font-size="9.4" fill="#333333" textLength="32.00" lengthAdjust="spacingAndGlyphs">CF 2029</text>
<text x="174.50" y="573.00" font-size="9.4" fill="#333333" textLength="32.50" lengthAdjust="spacingAndGlyphs">BS 2029</text>
<text x="224.80" y="573.00" font-size="9.4" fill="#333333" textLength="108.00" lengthAdjust="spacingAndGlyphs">Statements Summary 2029</text>
<rect x="346.0" y="561.6" width="60.0" height="16.2" rx="1.5" fill="#ffff8f"/>
<text x="351.20" y="573.00" font-size="9.4" fill="#333333" textLength="48.80" lengthAdjust="spacingAndGlyphs">CAPEX 2029</text>
<text x="418.00" y="573.00" font-size="9.4" fill="#333333" textLength="88.80" lengthAdjust="spacingAndGlyphs">Sales Summary Charts</text>
<text x="566.80" y="573.00" font-size="9.4" fill="#333333" textLength="16.00" lengthAdjust="spacingAndGlyphs">BEA</text>
<rect x="593.4" y="561.6" width="48.8" height="16.2" rx="1.5" fill="#ffff8f"/>
<text x="599.70" y="573.00" font-size="9.4" fill="#333333" textLength="37.00" lengthAdjust="spacingAndGlyphs">Expenses</text>
<rect x="649.3" y="561.6" width="88.2" height="16.2" rx="1.5" fill="#ffff8f"/>
<text x="654.30" y="573.00" font-size="9.4" fill="#333333" textLength="77.70" lengthAdjust="spacingAndGlyphs">COGS Assumptions</text>
<rect x="743.8" y="561.6" width="96.6" height="16.2" rx="1.5" fill="#ffff8f"/>
<text x="749.70" y="573.00" font-size="9.4" fill="#333333" textLength="84.80" lengthAdjust="spacingAndGlyphs">Salaries Assumptions</text>
<line x1="116.00" y1="562.50" x2="116.00" y2="576.50" stroke="#f4f6f8" stroke-width="0.9" />
<line x1="166.00" y1="562.50" x2="166.00" y2="576.50" stroke="#f4f6f8" stroke-width="0.9" />
<line x1="216.00" y1="562.50" x2="216.00" y2="576.50" stroke="#f4f6f8" stroke-width="0.9" />
<line x1="340.00" y1="562.50" x2="340.00" y2="576.50" stroke="#f4f6f8" stroke-width="0.9" />
<line x1="412.00" y1="562.50" x2="412.00" y2="576.50" stroke="#f4f6f8" stroke-width="0.9" />
<line x1="512.00" y1="562.50" x2="512.00" y2="576.50" stroke="#f4f6f8" stroke-width="0.9" />
<line x1="588.00" y1="562.50" x2="588.00" y2="576.50" stroke="#f4f6f8" stroke-width="0.9" />
<line x1="845.00" y1="562.50" x2="845.00" y2="576.50" stroke="#f4f6f8" stroke-width="0.9" />
<rect x="518.00" y="559.00" width="38.00" height="20.00" fill="#ffffff" />
<text x="524.80" y="571.00" font-size="9.4" fill="#1f1f1f" textLength="26.00" lengthAdjust="spacingAndGlyphs" font-weight="bold">Charts</text>
<line x1="524.60" y1="574.40" x2="551.00" y2="574.40" stroke="#107c41" stroke-width="1.2" />
<clipPath id="cc"><rect x="850" y="559" width="30.6" height="20"/></clipPath>
<g clip-path="url(#cc)">
<text x="853.00" y="573.00" font-size="9.4" fill="#333333" textLength="29.00" lengthAdjust="spacingAndGlyphs">Calcula</text>
</g>
<circle cx="887.6" cy="568.8" r="0.8" fill="#333333"/>
<circle cx="890.0" cy="568.8" r="0.8" fill="#333333"/>
<circle cx="892.4" cy="568.8" r="0.8" fill="#333333"/>
<path d="M907.2 569.2 h7.6 M911 565.4 v7.6" stroke="#3a3a3a" stroke-width="0.9"/>
<circle cx="932.2" cy="566.8" r="0.7" fill="#5a5a5a"/>
<circle cx="932.2" cy="569.4" r="0.7" fill="#5a5a5a"/>
<circle cx="932.2" cy="572.0" r="0.7" fill="#5a5a5a"/>
<path d="M949.6 566.8 L946 569.3 L949.6 571.8 Z" fill="#4a4a4a"/>
<path d="M981.4 566.8 L985 569.3 L981.4 571.8 Z" fill="#4a4a4a"/>
<rect x="953.6" y="566.6" width="21.4" height="5.4" rx="2.7" fill="#6a6a6a"/>
<rect x="0.00" y="579.50" width="1000.00" height="10.50" fill="#f3f3f3" />
<text x="8.00" y="589.00" font-size="7.4" fill="#555555" textLength="18.00" lengthAdjust="spacingAndGlyphs">Ready</text>
<g fill="none" stroke="#444444" stroke-width="0.9"><rect x="39.6" y="582.8" width="8" height="7.6"/><path d="M39.6 585.2 h8 M42.2 582.8 v7.6 M44.9 582.8 v7.6 M39.6 587.6 h8"/></g><circle cx="46" cy="588.6" r="1.6" fill="#444444"/>
<g fill="none" stroke="#3c3c3c" stroke-width="0.9"><path d="M60.6 584.4 q3.6 -2.6 7.2 0"/><path d="M60.6 585.6 h7.2 M62.8 585.8 l-1 4.4 M65.6 585.8 l1 4.4 M64.2 585.8 v4"/></g>
<text x="72.00" y="589.00" font-size="7.2" fill="#2a2a2a" textLength="78.40" lengthAdjust="spacingAndGlyphs" font-weight="bold">Accessibility: Investigate</text>
<g fill="none" stroke="#4a4a4a" stroke-width="0.8"><rect x="815.6" y="582.4" width="7.8" height="7.8"/><path d="M815.6 585 h7.8 M815.6 587.6 h7.8 M818.2 582.4 v7.8 M820.8 582.4 v7.8"/><rect x="841.6" y="582.4" width="7.8" height="7.8"/><path d="M843.2 584.6 h4.6 M843.2 586.6 h4.6 M843.2 588.6 h4.6"/><rect x="868.2" y="582.4" width="7.8" height="7.8"/><path d="M872.1 582.4 v7.8 M868.2 586.3 h7.8"/></g>
<line x1="888.60" y1="586.40" x2="892.60" y2="586.40" stroke="#4a4a4a" stroke-width="0.8" />
<line x1="897.00" y1="586.40" x2="962.60" y2="586.40" stroke="#8a8a8a" stroke-width="0.7" />
<rect x="928.60" y="582.60" width="1.80" height="7.40" fill="#4a4a4a" />
<path d="M964.8 586.4 h4 M966.8 584.4 v4" stroke="#4a4a4a" stroke-width="0.8"/>
<text x="978.20" y="589.00" font-size="6.6" fill="#444444" textLength="19.80" lengthAdjust="spacingAndGlyphs">100%</text>
</svg>
</body></html>
